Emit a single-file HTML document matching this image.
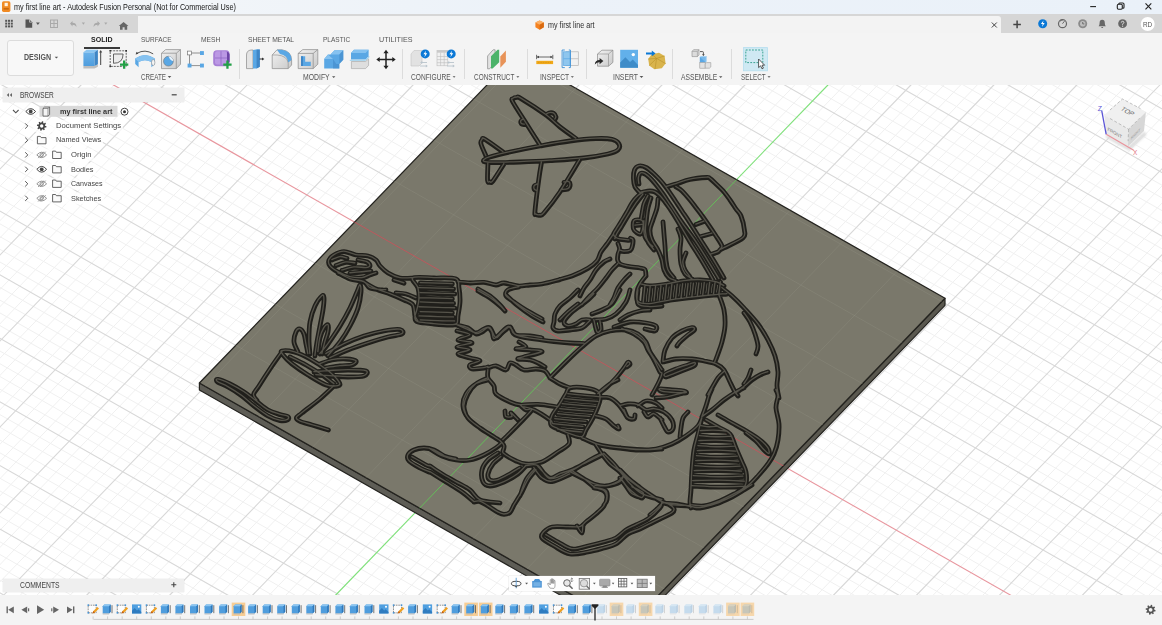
<!DOCTYPE html>
<html lang="en"><head><meta charset="utf-8"><title>my first line art - Autodesk Fusion</title>
<style>
html,body{margin:0;padding:0}
body{width:1162px;height:625px;overflow:hidden;position:relative;background:#fff;font-family:"Liberation Sans",sans-serif;font-size:8px;color:#3c3c3c}
.abs{position:absolute}
.cv{position:absolute;left:0;top:0}
.t{position:absolute;transform-origin:0 50%;white-space:nowrap;line-height:1.15;font-family:"Liberation Sans",sans-serif}
.titlebar{position:absolute;left:0;top:0;width:1162px;height:14px;background:linear-gradient(90deg,#f5f7f9 0,#ecf2f9 45%,#eaf1f9 100%)}
.qat{position:absolute;left:0;top:14px;width:1162px;height:19px;background:#d6d6d6}
.tab{position:absolute;left:137.500px;top:1.500px;width:863.500px;height:17.500px;background:#f3f3f3;border-radius:0 3px 0 0}
.ribbon{position:absolute;left:0;top:33px;width:1162px;height:52px;background:#f4f4f4}
.dbtn{position:absolute;left:7px;top:39.500px;width:66.500px;height:36.800px;box-sizing:border-box;border:1px solid #dcdcdc;border-radius:3px;background:#f8f8f8}
.phead{position:absolute;background:#efefef;box-shadow:0 0 1px #ccc}
.bottombar{position:absolute;left:0;top:594.500px;width:1162px;height:31px;background:#f4f4f4}
</style></head>
<body>
<svg class="cv" width="1162" height="625" viewBox="0 0 1162 625">
<rect width="1162" height="625" fill="#fff"/>
<path d="M-4.0 70.0L-20.0 86.5M29.2 70.0L-20.0 120.9M45.8 70.0L-20.0 138.1M1160.7 70.0L1182.0 82.1M62.3 70.0L-20.0 155.3M1138.3 70.0L1182.0 94.8M78.9 70.0L-20.0 172.5M1115.9 70.0L1182.0 107.6M112.1 70.0L-20.0 206.9M1071.2 70.0L1182.0 133.0M128.7 70.0L-20.0 224.1M1048.9 70.0L1182.0 145.7M145.3 70.0L-20.0 241.3M1026.5 70.0L1182.0 158.4M161.9 70.0L-20.0 258.5M1004.1 70.0L1182.0 171.2M195.1 70.0L-20.0 292.9M959.4 70.0L1182.0 196.6M211.7 70.0L-20.0 310.1M937.0 70.0L1182.0 209.3M228.3 70.0L-20.0 327.3M914.7 70.0L1182.0 222.0M244.9 70.0L-20.0 344.5M892.3 70.0L1182.0 234.7M278.1 70.0L-20.0 378.9M847.6 70.0L1182.0 260.2M294.7 70.0L-20.0 396.1M825.2 70.0L1182.0 272.9M311.3 70.0L-20.0 413.3M802.8 70.0L1182.0 285.6M327.9 70.0L-20.0 430.5M780.5 70.0L1182.0 298.3M361.1 70.0L-20.0 464.9M735.7 70.0L1182.0 323.8M377.7 70.0L-20.0 482.1M713.4 70.0L1182.0 336.5M394.3 70.0L-20.0 499.3M691.0 70.0L1182.0 349.2M410.9 70.0L-20.0 516.5M668.7 70.0L1182.0 361.9M444.1 70.0L-20.0 550.9M623.9 70.0L1182.0 387.4M460.7 70.0L-20.0 568.1M601.6 70.0L1182.0 400.1M477.3 70.0L-20.0 585.3M579.2 70.0L1182.0 412.8M493.9 70.0L-20.0 602.5M556.8 70.0L1182.0 425.5M527.0 70.0L6.0 610.0M512.1 70.0L1182.0 451.0M543.6 70.0L22.6 610.0M489.7 70.0L1182.0 463.7M560.2 70.0L39.2 610.0M467.4 70.0L1182.0 476.4M576.8 70.0L55.8 610.0M445.0 70.0L1182.0 489.1M610.0 70.0L89.0 610.0M400.3 70.0L1182.0 514.5M626.6 70.0L105.6 610.0M377.9 70.0L1182.0 527.3M643.2 70.0L122.2 610.0M355.6 70.0L1182.0 540.0M659.8 70.0L138.8 610.0M333.2 70.0L1182.0 552.7M693.0 70.0L171.9 610.0M288.5 70.0L1182.0 578.1M709.6 70.0L188.5 610.0M266.1 70.0L1182.0 590.9M726.2 70.0L205.1 610.0M243.7 70.0L1182.0 603.6M742.8 70.0L221.7 610.0M221.4 70.0L1170.9 610.0M776.0 70.0L254.9 610.0M176.6 70.0L1126.2 610.0M792.6 70.0L271.5 610.0M154.3 70.0L1103.8 610.0M809.2 70.0L288.1 610.0M131.9 70.0L1081.5 610.0M825.8 70.0L304.7 610.0M109.5 70.0L1059.1 610.0M859.0 70.0L337.9 610.0M64.8 70.0L1014.4 610.0M875.6 70.0L354.5 610.0M42.5 70.0L992.0 610.0M892.2 70.0L371.1 610.0M20.1 70.0L969.7 610.0M908.8 70.0L387.7 610.0M-2.3 70.0L947.3 610.0M942.0 70.0L420.9 610.0M-20.0 85.4L902.6 610.0M958.5 70.0L437.5 610.0M-20.0 98.1L880.2 610.0M975.1 70.0L454.1 610.0M-20.0 110.8L857.8 610.0M991.7 70.0L470.7 610.0M-20.0 123.5L835.5 610.0M1024.9 70.0L503.9 610.0M-20.0 148.9L790.7 610.0M1041.5 70.0L520.5 610.0M-20.0 161.7L768.4 610.0M1058.1 70.0L537.1 610.0M-20.0 174.4L746.0 610.0M1074.7 70.0L553.7 610.0M-20.0 187.1L723.6 610.0M1107.9 70.0L586.9 610.0M-20.0 212.5L678.9 610.0M1124.5 70.0L603.4 610.0M-20.0 225.3L656.6 610.0M1141.1 70.0L620.0 610.0M-20.0 238.0L634.2 610.0M1157.7 70.0L636.6 610.0M-20.0 250.7L611.8 610.0M1182.0 79.2L669.8 610.0M-20.0 276.1L567.1 610.0M1182.0 96.4L686.4 610.0M-20.0 288.8L544.7 610.0M1182.0 113.6L703.0 610.0M-20.0 301.6L522.4 610.0M1182.0 130.8L719.6 610.0M-20.0 314.3L500.0 610.0M1182.0 165.2L752.8 610.0M-20.0 339.7L455.3 610.0M1182.0 182.4L769.4 610.0M-20.0 352.4L432.9 610.0M1182.0 199.6L786.0 610.0M-20.0 365.2L410.5 610.0M1182.0 216.8L802.6 610.0M-20.0 377.9L388.2 610.0M1182.0 251.2L835.8 610.0M-20.0 403.3L343.4 610.0M1182.0 268.4L852.4 610.0M-20.0 416.0L321.1 610.0M1182.0 285.6L869.0 610.0M-20.0 428.7L298.7 610.0M1182.0 302.8L885.6 610.0M-20.0 441.5L276.4 610.0M1182.0 337.2L918.8 610.0M-20.0 466.9L231.6 610.0M1182.0 354.4L935.4 610.0M-20.0 479.6L209.3 610.0M1182.0 371.6L952.0 610.0M-20.0 492.3L186.9 610.0M1182.0 388.8L968.6 610.0M-20.0 505.1L164.5 610.0M1182.0 423.2L1001.8 610.0M-20.0 530.5L119.8 610.0M1182.0 440.4L1018.4 610.0M-20.0 543.2L97.4 610.0M1182.0 457.6L1035.0 610.0M-20.0 555.9L75.1 610.0M1182.0 474.8L1051.5 610.0M-20.0 568.7L52.7 610.0M1182.0 509.2L1084.7 610.0M-20.0 594.1L8.0 610.0M1182.0 526.4L1101.3 610.0M-20.0 606.8L-14.4 610.0M1182.0 543.6L1117.9 610.0M1182.0 560.8L1134.5 610.0M1182.0 595.2L1167.7 610.0" stroke="#f0f0f0" stroke-width="1" fill="none"/>
<path d="M12.6 70.0L-20.0 103.7M95.5 70.0L-20.0 189.7M1093.6 70.0L1182.0 120.3M178.5 70.0L-20.0 275.7M981.8 70.0L1182.0 183.9M261.5 70.0L-20.0 361.7M869.9 70.0L1182.0 247.5M344.5 70.0L-20.0 447.7M758.1 70.0L1182.0 311.1M427.5 70.0L-20.0 533.7M646.3 70.0L1182.0 374.6M510.4 70.0L-10.6 610.0M534.5 70.0L1182.0 438.2M593.4 70.0L72.4 610.0M422.6 70.0L1182.0 501.8M676.4 70.0L155.4 610.0M310.8 70.0L1182.0 565.4M759.4 70.0L238.3 610.0M199.0 70.0L1148.6 610.0M925.4 70.0L404.3 610.0M-20.0 72.6L924.9 610.0M1008.3 70.0L487.3 610.0M-20.0 136.2L813.1 610.0M1091.3 70.0L570.3 610.0M-20.0 199.8L701.3 610.0M1174.3 70.0L653.2 610.0M-20.0 263.4L589.5 610.0M1182.0 148.0L736.2 610.0M-20.0 327.0L477.6 610.0M1182.0 234.0L819.2 610.0M-20.0 390.6L365.8 610.0M1182.0 320.0L902.2 610.0M-20.0 454.2L254.0 610.0M1182.0 406.0L985.2 610.0M-20.0 517.8L142.2 610.0M1182.0 492.0L1068.1 610.0M-20.0 581.4L30.3 610.0M1182.0 578.0L1151.1 610.0" stroke="#d8d8d8" stroke-width="1.1" fill="none"/>
<path d="M87.2 70.0L1036.7 610.0" stroke="#e8969e" stroke-width="1.1"/>
<path d="M842.4 70.0L321.3 610.0" stroke="#7fe07a" stroke-width="1.1"/>
<polygon points="199.4,383.0 628.1,626.7 628.1,633.7 199.4,390.0" fill="#5e5d56" stroke="#24231f" stroke-width="1.2" stroke-linejoin="round"/>
<polygon points="945.0,298.3 628.1,626.7 628.1,633.7 945.0,305.3" fill="#5a584f" stroke="#24231f" stroke-width="1.2" stroke-linejoin="round"/>
<polygon points="516.4,54.5 945.0,298.3 628.1,626.7 199.4,383.0" fill="#7a786b" stroke="#24231f" stroke-width="1.3" stroke-linejoin="round"/>
<clipPath id="pc"><polygon points="516.4,54.5 945.0,298.3 628.1,626.7 199.4,383.0"/></clipPath>
<g clip-path="url(#pc)">
<path d="M12.6 70.0L-20.0 103.7M95.5 70.0L-20.0 189.7M1093.6 70.0L1182.0 120.3M178.5 70.0L-20.0 275.7M981.8 70.0L1182.0 183.9M261.5 70.0L-20.0 361.7M869.9 70.0L1182.0 247.5M344.5 70.0L-20.0 447.7M758.1 70.0L1182.0 311.1M427.5 70.0L-20.0 533.7M646.3 70.0L1182.0 374.6M510.4 70.0L-10.6 610.0M534.5 70.0L1182.0 438.2M593.4 70.0L72.4 610.0M422.6 70.0L1182.0 501.8M676.4 70.0L155.4 610.0M310.8 70.0L1182.0 565.4M759.4 70.0L238.3 610.0M199.0 70.0L1148.6 610.0M925.4 70.0L404.3 610.0M-20.0 72.6L924.9 610.0M1008.3 70.0L487.3 610.0M-20.0 136.2L813.1 610.0M1091.3 70.0L570.3 610.0M-20.0 199.8L701.3 610.0M1174.3 70.0L653.2 610.0M-20.0 263.4L589.5 610.0M1182.0 148.0L736.2 610.0M-20.0 327.0L477.6 610.0M1182.0 234.0L819.2 610.0M-20.0 390.6L365.8 610.0M1182.0 320.0L902.2 610.0M-20.0 454.2L254.0 610.0M1182.0 406.0L985.2 610.0M-20.0 517.8L142.2 610.0M1182.0 492.0L1068.1 610.0M-20.0 581.4L30.3 610.0M1182.0 578.0L1151.1 610.0" stroke="#98968a" stroke-opacity=".28" stroke-width="1" fill="none"/>
<path d="M87.2 70.0L1036.7 610.0" stroke="#c8525a" stroke-opacity=".85" stroke-width="1"/>
<path d="M842.4 70.0L321.3 610.0" stroke="#62c558" stroke-opacity=".9" stroke-width="1"/>
</g>
<g fill="none" stroke-linecap="round" stroke-linejoin="round" clip-path="url(#pc)"><path d="M484.0 160.0C484.8 159.2 485.7 158.3 490.0 157.0C494.3 155.7 501.7 153.8 510.0 152.0C518.3 150.2 530.0 147.8 540.0 146.0C550.0 144.2 560.7 142.2 570.0 141.0C579.3 139.8 589.0 138.9 596.0 138.6C603.0 138.3 608.2 138.5 612.0 139.4C615.8 140.3 618.0 142.2 619.0 144.0C620.0 145.8 619.8 148.3 618.0 150.0C616.2 151.7 613.7 152.7 608.0 154.0C602.3 155.3 593.7 156.9 584.0 158.0C574.3 159.1 560.7 159.9 550.0 160.6C539.3 161.3 529.0 161.7 520.0 162.0C511.0 162.3 501.8 162.6 496.0 162.6C490.2 162.6 487.0 162.4 485.0 162.0C483.0 161.6 483.2 160.8 484.0 160.0zM540.0 145.0C537.7 141.3 530.5 130.2 526.0 123.0C521.5 115.8 514.9 106.1 512.8 102.0C510.7 97.9 512.5 99.4 513.2 98.6C513.9 97.8 515.7 97.4 517.0 97.4C518.3 97.4 516.2 95.7 521.0 98.6C525.8 101.5 539.5 110.3 546.0 115.0C552.5 119.7 555.0 123.1 560.0 127.0C565.0 130.9 573.3 136.7 576.0 138.6M546.0 115.0C546.5 114.7 547.7 113.3 549.0 113.0C550.3 112.7 552.4 112.7 553.6 113.4C554.8 114.1 555.8 116.0 556.0 117.0C556.2 118.0 555.2 119.0 555.0 119.4M523.6 119.4C523.2 119.7 521.3 120.2 521.0 121.0C520.7 121.8 521.0 123.4 521.6 124.0C522.2 124.6 523.9 124.5 524.4 124.6M486.0 156.0C485.2 154.0 481.7 146.7 481.0 144.0C480.3 141.3 481.3 140.8 482.0 140.0C482.7 139.2 481.5 137.4 485.0 139.4C488.5 141.4 500.0 149.9 503.0 152.0M488.0 163.0C487.9 165.9 487.3 177.4 487.6 180.6C487.9 183.8 489.1 181.9 490.0 182.0C490.9 182.1 490.7 184.0 493.0 181.0C495.3 178.0 502.2 166.8 504.0 164.0M541.6 162.0C541.2 164.7 540.1 169.8 539.0 178.0C537.9 186.2 535.5 204.9 535.0 211.0C534.5 217.1 535.2 213.7 536.0 214.4C536.8 215.1 538.7 215.4 540.0 215.2C541.3 215.0 540.7 216.9 544.0 213.0C547.3 209.1 554.1 200.8 560.0 192.0C565.9 183.2 576.3 165.3 579.6 160.0M537.6 184.4C537.1 184.7 534.9 185.1 534.4 186.0C533.9 186.9 534.0 188.8 534.4 189.6C534.8 190.4 536.6 190.8 537.0 191.0M564.0 182.4C564.8 182.3 568.0 181.4 569.0 182.0C570.0 182.6 570.2 184.8 570.0 186.0C569.8 187.2 569.5 188.3 568.0 189.0C566.5 189.7 562.2 189.8 561.0 190.0M640.0 193.0C639.2 192.0 636.1 189.3 635.0 187.0C633.9 184.7 633.6 181.8 633.5 179.0C633.4 176.2 633.6 172.2 634.5 170.0C635.4 167.8 637.1 166.4 639.0 166.0C640.9 165.6 643.7 166.3 646.0 167.5C648.3 168.7 650.7 170.9 653.0 173.0C655.3 175.1 658.0 177.8 660.0 180.0C662.0 182.2 663.3 183.8 665.0 186.0C666.7 188.2 668.2 190.3 670.0 193.0C671.8 195.7 674.0 199.0 676.0 202.0C678.0 205.0 679.7 207.5 682.0 211.0C684.3 214.5 686.7 217.8 690.0 223.0C693.3 228.2 698.0 235.7 702.0 242.0C706.0 248.3 710.3 255.0 714.0 261.0C717.7 267.0 722.3 275.2 724.0 278.0M639.0 184.0C638.9 183.0 638.2 179.8 638.5 178.0C638.8 176.2 639.4 174.2 640.5 173.5C641.6 172.8 643.2 173.1 645.0 174.0C646.8 174.9 649.0 177.0 651.0 179.0C653.0 181.0 655.0 183.5 657.0 186.0C659.0 188.5 661.0 191.2 663.0 194.0C665.0 196.8 667.0 200.0 669.0 203.0C671.0 206.0 672.7 208.5 675.0 212.0C677.3 215.5 679.5 219.0 683.0 224.0C686.5 229.0 691.8 235.8 696.0 242.0C700.2 248.2 704.2 254.8 708.0 261.0C711.8 267.2 717.2 276.0 719.0 279.0M640.0 193.0C640.5 192.8 641.3 192.3 643.0 192.0C644.7 191.7 648.0 191.0 650.0 191.0C652.0 191.0 653.3 191.2 655.0 192.0C656.7 192.8 658.3 194.3 660.0 196.0C661.7 197.7 663.3 199.8 665.0 202.0C666.7 204.2 668.0 206.0 670.0 209.0C672.0 212.0 673.7 214.5 677.0 220.0C680.3 225.5 685.8 235.2 690.0 242.0C694.2 248.8 698.2 254.7 702.0 261.0C705.8 267.3 711.2 276.8 713.0 280.0M666.0 187.0C667.7 186.5 672.0 185.2 676.0 184.0C680.0 182.8 684.8 180.6 690.0 179.5C695.2 178.4 703.7 177.7 707.0 177.5C710.3 177.3 708.5 177.4 710.0 178.5C711.5 179.6 713.7 181.8 716.0 184.0C718.3 186.2 721.7 189.3 724.0 192.0C726.3 194.7 728.0 197.2 730.0 200.0C732.0 202.8 734.2 206.3 736.0 209.0C737.8 211.7 739.6 212.5 741.0 216.0C742.4 219.5 744.1 226.3 744.4 230.0C744.7 233.7 746.4 235.0 743.0 238.0C739.6 241.0 727.8 246.0 724.0 248.0C720.2 250.0 721.0 249.3 720.0 250.0C719.0 250.7 719.5 251.3 718.0 252.0C716.5 252.7 712.2 254.0 711.0 254.4M676.0 187.0C677.0 187.7 679.7 188.8 682.0 191.0C684.3 193.2 687.5 197.0 690.0 200.0C692.5 203.0 694.8 206.2 697.0 209.0C699.2 211.8 699.8 212.5 703.0 217.0C706.2 221.5 712.8 231.2 716.0 236.0C719.2 240.8 721.3 243.7 722.0 246.0C722.7 248.3 720.3 249.3 720.0 250.0M696.0 224.5L704.0 221.5M701.0 236.5L712.0 233.5M644.0 192.0C643.0 192.7 640.0 194.2 638.0 196.0C636.0 197.8 633.8 200.3 632.0 203.0C630.2 205.7 628.8 208.8 627.0 212.0C625.2 215.2 622.8 219.0 621.0 222.0C619.2 225.0 617.2 227.9 616.0 230.0C614.8 232.1 613.6 233.1 613.6 234.4C613.6 235.7 614.9 237.2 616.0 238.0C617.1 238.8 617.8 239.0 620.0 239.4C622.2 239.8 627.5 240.2 629.0 240.4M630.4 238.4C630.8 238.7 632.7 238.7 633.0 240.0C633.3 241.3 632.8 244.3 632.4 246.0C632.0 247.7 631.8 249.5 630.4 250.4C629.0 251.3 625.8 251.6 624.0 251.6C622.2 251.6 620.3 250.6 619.6 250.4M618.0 243.6C618.3 244.5 619.6 247.2 619.6 249.0C619.6 250.8 618.3 252.6 618.0 254.4C617.7 256.2 617.3 258.4 617.6 260.0C617.9 261.6 618.3 262.9 620.0 264.0C621.7 265.1 624.7 265.7 628.0 266.4C631.3 267.1 637.2 267.5 640.0 268.0C642.8 268.5 644.0 268.3 645.0 269.6C646.0 270.9 645.8 274.9 646.0 276.0M634.0 221.0C635.1 219.5 638.5 219.8 640.0 220.0C641.5 220.2 642.5 220.7 643.0 222.0C643.5 223.3 643.3 226.0 643.0 228.0C642.7 230.0 642.0 233.2 641.0 234.0C640.0 234.8 638.2 233.8 637.0 233.0C635.8 232.2 634.0 231.0 633.5 229.0C633.0 227.0 632.9 222.5 634.0 221.0zM635.0 225.5L642.0 224.8M643.0 194.5C641.7 196.2 637.5 201.4 635.0 205.0C632.5 208.6 630.2 212.5 628.0 216.0C625.8 219.5 623.8 223.0 622.0 226.0C620.2 229.0 618.2 231.8 617.0 234.0C615.8 236.2 615.3 238.2 615.0 239.0M644.0 221.0C644.0 222.5 643.8 227.3 644.0 230.0C644.2 232.7 644.2 234.8 645.0 237.0C645.8 239.2 647.7 241.3 649.0 243.0C650.3 244.7 652.3 246.3 653.0 247.0M658.0 199.0C657.8 200.5 657.8 204.5 657.0 208.0C656.2 211.5 654.2 216.3 653.0 220.0C651.8 223.7 650.2 226.7 650.0 230.0C649.8 233.3 650.7 236.7 652.0 240.0C653.3 243.3 656.3 246.7 658.0 250.0C659.7 253.3 661.0 256.7 662.0 260.0C663.0 263.3 662.8 267.0 664.0 270.0C665.2 273.0 667.0 276.2 669.0 278.0C671.0 279.8 674.8 280.5 676.0 281.0M648.0 196.0C647.3 197.3 645.0 201.0 644.0 204.0C643.0 207.0 642.5 211.3 642.0 214.0C641.5 216.7 641.2 219.0 641.0 220.0M651.0 198.0C650.5 199.7 648.8 204.3 648.0 208.0C647.2 211.7 646.8 216.0 646.4 220.0C646.0 224.0 645.3 228.3 645.6 232.0C645.9 235.7 646.6 239.0 648.0 242.0C649.4 245.0 653.0 248.7 654.0 250.0M663.0 222.0C663.2 224.0 663.7 230.0 664.0 234.0C664.3 238.0 664.7 241.7 665.0 246.0C665.3 250.3 665.5 256.0 666.0 260.0C666.5 264.0 666.7 267.0 668.0 270.0C669.3 273.0 673.0 276.7 674.0 278.0M678.0 229.0C678.5 230.5 680.7 234.5 681.0 238.0C681.3 241.5 680.0 245.7 680.0 250.0C680.0 254.3 680.2 260.0 681.0 264.0C681.8 268.0 683.2 271.5 685.0 274.0C686.8 276.5 690.8 278.2 692.0 279.0M686.0 253.0C685.5 254.5 683.2 259.2 683.0 262.0C682.8 264.8 683.8 267.5 685.0 270.0C686.2 272.5 689.2 275.8 690.0 277.0M613.6 234.4C612.5 236.0 609.1 241.1 607.0 244.0C604.9 246.9 602.7 249.2 601.0 252.0C599.3 254.8 599.2 258.3 597.0 261.0C594.8 263.7 592.2 265.9 588.0 268.4C583.8 270.9 576.7 274.2 572.0 276.0C567.3 277.8 562.0 278.8 560.0 279.4M610.0 259.0C609.0 259.5 606.3 260.2 604.0 262.0C601.7 263.8 598.3 267.0 596.0 270.0C593.7 273.0 592.0 277.0 590.0 280.0C588.0 283.0 585.7 285.3 584.0 288.0C582.3 290.7 580.7 294.7 580.0 296.0M618.0 264.0C617.0 265.0 614.0 267.7 612.0 270.0C610.0 272.3 608.3 275.0 606.0 278.0C603.7 281.0 600.7 285.0 598.0 288.0C595.3 291.0 592.7 293.2 590.0 296.0C587.3 298.8 583.3 303.5 582.0 305.0M630.0 274.0C629.0 275.0 626.0 277.7 624.0 280.0C622.0 282.3 619.7 285.0 618.0 288.0C616.3 291.0 615.3 295.2 614.0 298.0C612.7 300.8 610.7 303.8 610.0 305.0M646.0 276.0C645.0 277.3 641.5 281.3 640.0 284.0C638.5 286.7 637.3 289.0 637.0 292.0C636.7 295.0 635.8 300.0 638.0 302.0C640.2 304.0 644.3 304.3 650.0 304.0C655.7 303.7 664.3 301.2 672.0 300.0C679.7 298.8 688.7 297.8 696.0 297.0C703.3 296.2 710.8 295.5 716.0 295.0C721.2 294.5 725.2 294.2 727.0 294.0M640.0 284.0C641.7 284.3 645.3 286.0 650.0 286.0C654.7 286.0 662.3 284.8 668.0 284.0C673.7 283.2 678.7 281.7 684.0 281.0C689.3 280.3 694.7 279.8 700.0 280.0C705.3 280.2 712.0 281.0 716.0 282.0C720.0 283.0 722.7 285.3 724.0 286.0M645.0 286.4L643.4 302.4M650.4 286.0L648.8 301.8M655.8 285.8L654.2 301.2M661.2 285.4L659.6 300.6M666.6 285.2L665.0 300.0M672.0 284.8L670.4 299.6M677.4 284.6L675.8 299.0M682.8 284.2L681.2 298.4M688.2 284.0L686.6 297.8M693.6 283.6L692.0 297.2M699.0 283.4L697.4 296.8M704.4 283.0L702.8 296.2M709.8 282.8L708.2 295.6M715.2 282.4L713.6 295.0M720.6 282.2L719.0 294.4M376.0 273.0C375.0 273.3 372.3 274.2 370.0 275.0C367.7 275.8 365.3 277.7 362.0 278.0C358.7 278.3 354.0 278.0 350.0 277.0C346.0 276.0 341.3 273.8 338.0 272.0C334.7 270.2 331.5 268.0 330.0 266.0C328.5 264.0 328.3 261.8 329.0 260.0C329.7 258.2 331.5 256.4 334.0 255.0C336.5 253.6 340.3 251.6 344.0 251.6C347.7 251.6 352.0 254.3 356.0 255.0C360.0 255.7 364.7 255.2 368.0 256.0C371.3 256.8 374.0 258.3 376.0 260.0C378.0 261.7 378.0 263.8 380.0 266.0C382.0 268.2 384.7 271.0 388.0 273.0C391.3 275.0 395.7 277.2 400.0 278.0C404.3 278.8 411.7 278.0 414.0 278.0M332.0 260.0C333.3 259.5 337.5 257.3 340.0 257.0C342.5 256.7 345.8 258.2 347.0 258.4M336.0 265.6C337.7 265.1 342.8 262.8 346.0 262.4C349.2 262.0 353.5 263.1 355.0 263.2M342.0 270.4C344.0 269.9 350.0 267.8 354.0 267.4C358.0 267.0 363.3 268.2 366.0 268.0C368.7 267.8 369.8 267.0 370.0 266.0C370.2 265.0 369.0 263.0 367.0 262.0C365.0 261.0 359.5 260.3 358.0 260.0M350.0 273.2C352.0 273.0 358.5 272.5 362.0 272.2C365.5 271.9 369.5 271.4 371.0 271.2M338.0 273.0C340.0 274.0 345.7 277.5 350.0 279.0C354.3 280.5 360.7 280.5 364.0 282.0C367.3 283.5 367.0 286.7 370.0 288.0C373.0 289.3 379.3 289.7 382.0 290.0C384.7 290.3 385.3 290.0 386.0 290.0M394.0 280.0L404.0 283.2M396.0 293.0C397.7 293.2 402.7 293.2 406.0 294.0C409.3 294.8 414.3 297.3 416.0 298.0M364.0 282.0C366.0 283.2 371.7 287.0 376.0 289.0C380.3 291.0 385.3 292.2 390.0 294.0C394.7 295.8 400.2 298.2 404.0 300.0C407.8 301.8 411.2 302.3 413.0 305.0C414.8 307.7 414.2 313.3 415.0 316.0C415.8 318.7 417.5 320.2 418.0 321.0M413.0 278.0C415.7 276.3 426.8 277.8 434.0 278.0C441.2 278.2 451.8 277.3 456.0 279.0C460.2 280.7 458.3 284.2 459.0 288.0C459.7 291.8 460.2 297.3 460.0 302.0C459.8 306.7 458.5 312.3 458.0 316.0C457.5 319.7 458.3 322.5 457.0 324.0C455.7 325.5 453.8 325.0 450.0 325.0C446.2 325.0 439.3 324.5 434.0 324.0C428.7 323.5 421.2 323.0 418.0 322.0C414.8 321.0 415.2 320.0 415.0 318.0C414.8 316.0 416.3 313.0 417.0 310.0C417.7 307.0 418.8 303.7 419.0 300.0C419.2 296.3 419.0 291.7 418.0 288.0C417.0 284.3 410.3 279.7 413.0 278.0zM420.4 283.0C423.3 283.1 432.7 283.4 438.0 283.6C443.3 283.8 450.0 283.9 452.4 284.0M419.2 288.0C422.3 288.1 432.3 288.4 438.0 288.6C443.7 288.8 451.0 288.9 453.6 289.0M420.4 293.0C423.3 293.1 432.3 293.4 438.0 293.6C443.7 293.8 452.0 293.9 454.8 294.0M419.2 298.0C422.3 298.1 432.5 298.4 438.0 298.6C443.5 298.8 450.0 298.9 452.4 299.0M420.4 302.4C423.3 302.5 432.5 302.8 438.0 303.0C443.5 303.2 451.0 303.3 453.6 303.4M419.2 307.2C422.3 307.3 432.1 307.6 438.0 307.8C443.9 308.0 452.0 308.1 454.8 308.2M420.4 312.0C423.3 312.1 432.7 312.4 438.0 312.6C443.3 312.8 450.0 312.9 452.4 313.0M419.2 316.4C422.3 316.5 432.3 316.8 438.0 317.0C443.7 317.2 451.0 317.3 453.6 317.4M420.4 320.4C423.3 320.5 432.3 320.8 438.0 321.0C443.7 321.2 452.0 321.3 454.8 321.4M458.0 282.0C460.0 282.2 465.7 282.9 470.0 283.0C474.3 283.1 479.7 282.1 484.0 282.4C488.3 282.7 492.7 284.9 496.0 285.0C499.3 285.1 500.3 282.8 504.0 283.0C507.7 283.2 513.7 285.7 518.0 286.0C522.3 286.3 526.0 285.3 530.0 285.0C534.0 284.7 537.0 284.9 542.0 284.0C547.0 283.1 557.0 280.3 560.0 279.6M478.0 289.0C480.0 290.2 486.3 293.3 490.0 296.0C493.7 298.7 497.5 302.5 500.0 305.0C502.5 307.5 504.2 310.0 505.0 311.0M519.0 287.0C517.2 287.5 510.2 288.5 508.0 290.0C505.8 291.5 505.0 294.0 506.0 296.0C507.0 298.0 510.7 299.7 514.0 302.0C517.3 304.3 521.3 307.2 526.0 310.0C530.7 312.8 539.3 317.5 542.0 319.0M457.0 325.0C458.8 325.5 464.8 326.5 468.0 328.0C471.2 329.5 473.7 333.3 476.0 334.0C478.3 334.7 480.0 333.0 482.0 332.0C484.0 331.0 486.3 328.0 488.0 328.0C489.7 328.0 491.0 330.2 492.0 332.0C493.0 333.8 492.7 338.7 494.0 339.0C495.3 339.3 497.7 336.0 500.0 334.0C502.3 332.0 506.0 327.7 508.0 327.0C510.0 326.3 510.7 328.7 512.0 330.0C513.3 331.3 513.0 334.0 516.0 335.0C519.0 336.0 525.7 335.5 530.0 336.0C534.3 336.5 540.0 337.7 542.0 338.0M310.0 354.0C309.8 351.7 309.0 345.3 309.0 340.0C309.0 334.7 309.0 327.7 310.0 322.0C311.0 316.3 313.0 310.3 315.0 306.0C317.0 301.7 320.5 297.3 322.0 296.0C323.5 294.7 323.8 295.7 324.0 298.0C324.2 300.3 323.7 305.3 323.0 310.0C322.3 314.7 321.0 320.7 320.0 326.0C319.0 331.3 317.8 337.0 317.0 342.0C316.2 347.0 315.3 353.7 315.0 356.0M320.0 354.0C321.3 352.3 324.7 348.7 328.0 344.0C331.3 339.3 336.3 332.0 340.0 326.0C343.7 320.0 347.2 313.7 350.0 308.0C352.8 302.3 355.3 295.8 357.0 292.0C358.7 288.2 359.3 285.0 360.0 285.0C360.7 285.0 361.3 288.2 361.0 292.0C360.7 295.8 359.8 302.3 358.0 308.0C356.2 313.7 353.0 320.3 350.0 326.0C347.0 331.7 343.7 337.0 340.0 342.0C336.3 347.0 330.0 353.7 328.0 356.0M298.0 352.0C297.3 350.3 294.3 345.3 294.0 342.0C293.7 338.7 295.0 334.2 296.0 332.0C297.0 329.8 298.7 328.7 300.0 329.0C301.3 329.3 303.0 331.5 304.0 334.0C305.0 336.5 305.3 340.7 306.0 344.0C306.7 347.3 307.7 352.3 308.0 354.0M318.0 352.0C318.3 349.7 319.0 342.0 320.0 338.0C321.0 334.0 322.7 330.2 324.0 328.0C325.3 325.8 327.3 324.3 328.0 325.0C328.7 325.7 328.5 329.2 328.0 332.0C327.5 334.8 326.0 338.3 325.0 342.0C324.0 345.7 322.5 352.0 322.0 354.0M326.0 354.0C329.0 352.3 337.7 347.0 344.0 344.0C350.3 341.0 357.3 338.2 364.0 336.0C370.7 333.8 378.0 332.1 384.0 331.0C390.0 329.9 397.0 329.1 400.0 329.6C403.0 330.1 404.0 332.8 402.0 334.0C400.0 335.2 393.7 335.5 388.0 337.0C382.3 338.5 374.7 340.8 368.0 343.0C361.3 345.2 354.3 347.5 348.0 350.0C341.7 352.5 333.0 356.7 330.0 358.0M320.0 364.0C322.0 363.3 327.7 360.8 332.0 360.0C336.3 359.2 342.0 358.8 346.0 359.0C350.0 359.2 355.0 360.0 356.0 361.0C357.0 362.0 354.7 364.2 352.0 365.0C349.3 365.8 344.3 365.5 340.0 366.0C335.7 366.5 328.3 367.7 326.0 368.0M314.0 372.0C316.3 371.8 322.3 371.3 328.0 371.0C333.7 370.7 341.7 370.0 348.0 370.0C354.3 370.0 363.3 370.0 366.0 371.0C368.7 372.0 367.0 375.0 364.0 376.0C361.0 377.0 353.7 377.0 348.0 377.0C342.3 377.0 335.3 376.3 330.0 376.0C324.7 375.7 318.3 375.2 316.0 375.0M282.0 351.0C283.8 350.5 289.3 350.7 294.0 352.0C298.7 353.3 304.3 355.8 310.0 359.0C315.7 362.2 323.2 367.2 328.0 371.0C332.8 374.8 337.3 379.5 339.0 382.0C340.7 384.5 340.2 385.5 338.0 386.0C335.8 386.5 331.0 386.8 326.0 385.0C321.0 383.2 313.7 378.5 308.0 375.0C302.3 371.5 296.2 367.3 292.0 364.0C287.8 360.7 284.7 357.2 283.0 355.0C281.3 352.8 280.2 351.5 282.0 351.0zM290.0 357.0C292.7 358.3 300.7 362.0 306.0 365.0C311.3 368.0 317.3 371.8 322.0 375.0C326.7 378.2 332.0 382.5 334.0 384.0M282.4 351.4C280.3 354.3 273.9 363.2 270.0 369.0C266.1 374.8 261.7 381.7 259.0 386.0C256.3 390.3 253.9 392.2 253.6 394.6C253.3 397.0 256.4 399.6 257.0 400.6M218.0 379.4C220.1 379.7 225.7 381.9 230.0 384.0C234.3 386.1 239.7 389.2 244.0 392.0C248.3 394.8 252.0 398.0 256.0 401.0C260.0 404.0 264.0 407.7 268.0 410.0C272.0 412.3 276.7 413.5 280.0 414.6C283.3 415.7 286.7 415.7 288.0 416.6C289.3 417.5 288.9 419.1 287.6 419.8C286.3 420.5 283.3 421.2 280.0 420.6C276.7 420.0 272.3 418.4 268.0 416.0C263.7 413.6 258.3 409.3 254.0 406.0C249.7 402.7 246.3 399.2 242.0 396.0C237.7 392.8 232.1 389.3 228.0 387.0C223.9 384.7 219.3 383.3 217.6 382.0C215.9 380.7 215.9 379.1 218.0 379.4zM334.0 386.0C331.7 388.2 325.3 394.5 320.0 399.0C314.7 403.5 305.9 409.8 302.0 413.0C298.1 416.2 296.7 416.6 296.4 418.0C296.1 419.4 297.4 420.2 300.0 421.4C302.6 422.6 307.3 423.6 312.0 425.0C316.7 426.4 325.7 429.2 328.4 430.0M457.0 325.0C458.5 325.7 462.8 327.7 466.0 329.0C469.2 330.3 473.0 333.0 476.0 333.0C479.0 333.0 481.7 329.8 484.0 329.0C486.3 328.2 488.0 326.5 490.0 328.0C492.0 329.5 494.0 337.2 496.0 338.0C498.0 338.8 499.7 334.8 502.0 333.0C504.3 331.2 508.2 327.0 510.0 327.0C511.8 327.0 511.7 331.5 513.0 333.0C514.3 334.5 514.5 335.0 518.0 336.0C521.5 337.0 528.0 338.1 534.0 339.0C540.0 339.9 548.0 340.9 554.0 341.6C560.0 342.3 565.0 342.7 570.0 343.0C575.0 343.3 581.7 343.5 584.0 343.6M457.0 331.0C459.2 331.7 469.8 333.5 470.0 335.0C470.2 336.5 457.7 338.7 458.0 340.0C458.3 341.3 472.2 341.8 472.0 343.0C471.8 344.2 457.3 345.8 457.0 347.0C456.7 348.2 469.8 348.8 470.0 350.0C470.2 351.2 458.0 352.7 458.0 354.0C458.0 355.3 466.3 356.8 470.0 358.0C473.7 359.2 480.0 359.8 480.0 361.0C480.0 362.2 471.3 363.7 470.0 365.0C468.7 366.3 469.7 368.5 472.0 369.0C474.3 369.5 481.3 368.3 484.0 368.0C486.7 367.7 487.3 367.2 488.0 367.0M488.0 368.0C489.3 367.7 493.0 365.7 496.0 366.0C499.0 366.3 503.7 370.5 506.0 370.0C508.3 369.5 508.3 363.8 510.0 363.0C511.7 362.2 513.7 363.8 516.0 365.0C518.3 366.2 520.7 369.3 524.0 370.0C527.3 370.7 532.5 368.8 536.0 369.0C539.5 369.2 542.7 369.5 545.0 371.0C547.3 372.5 549.2 376.8 550.0 378.0M519.0 342.0C520.2 342.8 526.5 345.8 526.0 347.0C525.5 348.2 515.3 348.5 516.0 349.0C516.7 349.5 525.7 349.5 530.0 350.0C534.3 350.5 543.0 350.8 542.0 352.0C541.0 353.2 528.0 355.8 524.0 357.0C520.0 358.2 517.0 358.5 518.0 359.0C519.0 359.5 526.7 359.3 530.0 360.0C533.3 360.7 535.5 361.8 538.0 363.0C540.5 364.2 543.8 366.3 545.0 367.0M478.0 291.0C480.0 292.2 486.3 295.5 490.0 298.0C493.7 300.5 497.5 303.8 500.0 306.0C502.5 308.2 504.2 310.2 505.0 311.0M506.0 295.0C508.0 296.8 513.7 302.5 518.0 306.0C522.3 309.5 527.8 313.3 532.0 316.0C536.2 318.7 541.2 321.0 543.0 322.0M578.0 290.0C576.7 291.3 573.0 295.3 570.0 298.0C567.0 300.7 562.5 303.3 560.0 306.0C557.5 308.7 556.0 311.3 555.0 314.0C554.0 316.7 554.3 319.7 554.0 322.0C553.7 324.3 552.3 326.5 553.0 328.0C553.7 329.5 555.2 330.7 558.0 331.0C560.8 331.3 566.0 330.5 570.0 330.0C574.0 329.5 579.0 329.2 582.0 328.0C585.0 326.8 586.7 324.3 588.0 323.0C589.3 321.7 591.0 320.5 590.0 320.0C589.0 319.5 584.3 319.3 582.0 320.0C579.7 320.7 578.3 323.0 576.0 324.0C573.7 325.0 570.0 326.3 568.0 326.0C566.0 325.7 563.7 324.0 564.0 322.0C564.3 320.0 567.3 316.7 570.0 314.0C572.7 311.3 577.0 308.3 580.0 306.0C583.0 303.7 585.7 302.0 588.0 300.0C590.3 298.0 593.0 295.0 594.0 294.0M560.0 320.0C561.3 318.7 565.0 314.7 568.0 312.0C571.0 309.3 576.3 305.3 578.0 304.0M592.0 314.0C593.7 313.3 598.7 311.7 602.0 310.0C605.3 308.3 609.0 307.3 612.0 304.0C615.0 300.7 618.7 292.3 620.0 290.0M596.0 320.0C597.7 319.8 602.7 320.0 606.0 319.0C609.3 318.0 612.7 316.8 616.0 314.0C619.3 311.2 623.7 306.0 626.0 302.0C628.3 298.0 629.3 292.0 630.0 290.0M594.0 320.0C594.5 322.0 595.8 330.3 597.0 332.0C598.2 333.7 600.5 331.8 601.0 330.0C601.5 328.2 600.2 322.5 600.0 321.0M550.0 378.0C552.7 375.3 560.7 367.2 566.0 362.0C571.3 356.8 577.0 351.3 582.0 347.0C587.0 342.7 591.3 338.7 596.0 336.0C600.7 333.3 605.0 332.0 610.0 331.0C615.0 330.0 621.3 329.5 626.0 330.0C630.7 330.5 634.7 332.0 638.0 334.0C641.3 336.0 644.0 339.0 646.0 342.0C648.0 345.0 648.0 348.3 650.0 352.0C652.0 355.7 656.0 361.0 658.0 364.0C660.0 367.0 661.3 369.0 662.0 370.0M614.0 327.0C616.7 326.2 624.7 322.7 630.0 322.0C635.3 321.3 641.7 322.3 646.0 323.0C650.3 323.7 654.5 324.7 656.0 326.0C657.5 327.3 656.8 330.5 655.0 331.0C653.2 331.5 646.7 329.3 645.0 329.0M638.0 290.0C638.0 292.3 636.0 301.2 638.0 304.0C640.0 306.8 646.0 306.7 650.0 307.0C654.0 307.3 660.0 306.2 662.0 306.0M627.0 367.0C627.5 366.6 629.8 365.2 630.0 364.4C630.2 363.6 629.0 361.8 628.0 362.4C627.0 363.0 626.0 365.4 624.0 368.0C622.0 370.6 619.0 374.7 616.0 378.0C613.0 381.3 609.0 385.3 606.0 388.0C603.0 390.7 599.3 393.0 598.0 394.0M488.0 378.0C486.0 379.0 479.3 381.3 476.0 384.0C472.7 386.7 470.0 390.3 468.0 394.0C466.0 397.7 464.3 402.5 464.0 406.0C463.7 409.5 465.7 413.5 466.0 415.0M488.0 370.0C488.0 371.3 487.0 375.3 488.0 378.0C489.0 380.7 492.7 383.3 494.0 386.0C495.3 388.7 493.3 391.3 496.0 394.0C498.7 396.7 506.0 400.2 510.0 402.0C514.0 403.8 515.3 404.6 520.0 405.0C524.7 405.4 531.7 404.1 538.0 404.4C544.3 404.7 554.7 406.6 558.0 407.0M550.0 378.0C551.7 379.0 556.7 382.3 560.0 384.0C563.3 385.7 568.3 387.3 570.0 388.0M488.0 380.0C486.0 380.7 479.7 381.7 476.0 384.0C472.3 386.3 468.2 390.3 466.0 394.0C463.8 397.7 462.7 402.0 463.0 406.0C463.3 410.0 465.2 414.3 468.0 418.0C470.8 421.7 475.7 424.8 480.0 428.0C484.3 431.2 490.7 434.8 494.0 437.0C497.3 439.2 498.3 439.5 500.0 441.0C501.7 442.5 503.5 444.3 504.0 446.0C504.5 447.7 503.2 450.2 503.0 451.0M520.0 405.0C521.0 405.8 524.0 409.2 526.0 410.0C528.0 410.8 533.3 407.5 532.0 410.0C530.7 412.5 522.8 420.0 518.0 425.0C513.2 430.0 505.5 437.5 503.0 440.0M522.0 407.0C524.0 407.5 529.3 407.8 534.0 410.0C538.7 412.2 546.9 417.7 550.0 420.0C553.1 422.3 552.0 423.0 552.4 423.6M505.0 411.0C505.2 412.0 504.8 416.0 506.0 417.0C507.2 418.0 511.2 417.7 512.0 417.0C512.8 416.3 510.0 412.5 511.0 413.0C512.0 413.5 516.8 418.8 518.0 420.0M570.0 388.0C573.3 387.0 581.3 387.3 586.0 388.0C590.7 388.7 595.7 390.0 598.0 392.0C600.3 394.0 600.7 396.0 600.0 400.0C599.3 404.0 596.3 411.0 594.0 416.0C591.7 421.0 588.0 426.5 586.0 430.0C584.0 433.5 584.7 436.3 582.0 437.0C579.3 437.7 574.0 435.3 570.0 434.0C566.0 432.7 561.2 430.5 558.0 429.0C554.8 427.5 552.0 427.2 551.0 425.0C550.0 422.8 550.5 419.5 552.0 416.0C553.5 412.5 557.7 407.7 560.0 404.0C562.3 400.3 564.3 396.7 566.0 394.0C567.7 391.3 566.7 389.0 570.0 388.0zM568.0 394.0C570.4 394.3 577.7 395.1 582.5 395.6C587.3 396.1 594.6 396.6 597.0 396.8M565.0 399.0C567.8 399.3 576.0 400.1 581.5 400.6C587.0 401.1 595.2 401.6 598.0 401.8M562.4 404.0C565.2 404.3 573.6 405.1 579.2 405.6C584.8 406.1 593.2 406.6 596.0 406.8M560.0 409.0C562.8 409.3 571.0 410.1 576.5 410.6C582.0 411.1 590.2 411.6 593.0 411.8M557.6 414.0C560.3 414.3 568.4 415.1 573.8 415.6C579.2 416.1 587.3 416.6 590.0 416.8M555.0 419.0C557.6 419.3 565.3 420.1 570.5 420.6C575.7 421.1 583.4 421.6 586.0 421.8M553.0 424.0C555.5 424.3 563.0 425.1 568.0 425.6C573.0 426.1 580.5 426.6 583.0 426.8M558.0 429.6C560.0 429.9 566.0 430.7 570.0 431.2C574.0 431.7 580.0 432.2 582.0 432.4M568.0 435.0C568.2 436.5 570.7 441.2 569.0 444.0C567.3 446.8 562.5 449.0 558.0 452.0C553.5 455.0 547.3 460.0 542.0 462.0C536.7 464.0 530.3 464.2 526.0 464.0C521.7 463.8 519.7 462.7 516.0 461.0C512.3 459.3 506.2 455.7 504.0 454.0C501.8 452.3 503.2 451.5 503.0 451.0M430.0 449.0C432.0 450.2 437.7 454.2 442.0 456.0C446.3 457.8 451.3 459.3 456.0 460.0C460.7 460.7 465.3 460.8 470.0 460.0C474.7 459.2 479.7 457.0 484.0 455.0C488.3 453.0 493.0 450.0 496.0 448.0C499.0 446.0 501.0 443.8 502.0 443.0M498.0 453.0C496.3 454.2 490.7 457.2 488.0 460.0C485.3 462.8 482.8 466.3 482.0 470.0C481.2 473.7 481.7 479.3 483.0 482.0C484.3 484.7 486.5 486.0 490.0 486.0C493.5 486.0 499.3 484.0 504.0 482.0C508.7 480.0 514.3 476.7 518.0 474.0C521.7 471.3 524.7 467.3 526.0 466.0M501.0 457.0C499.7 458.2 495.2 461.2 493.0 464.0C490.8 466.8 488.5 471.3 488.0 474.0C487.5 476.7 488.3 479.0 490.0 480.0C491.7 481.0 494.7 481.0 498.0 480.0C501.3 479.0 506.3 476.0 510.0 474.0C513.7 472.0 518.3 469.0 520.0 468.0M526.0 466.0C528.0 466.0 534.0 463.8 538.0 466.0C542.0 468.2 544.7 478.0 550.0 479.0C555.3 480.0 563.3 475.2 570.0 472.0C576.7 468.8 584.7 463.0 590.0 460.0C595.3 457.0 600.0 455.0 602.0 454.0M534.0 468.0C535.3 469.7 539.0 475.7 542.0 478.0C545.0 480.3 547.3 482.2 552.0 481.6C556.7 481.0 567.0 475.6 570.0 474.4M596.0 445.0C597.0 446.5 599.7 450.8 602.0 454.0C604.3 457.2 607.0 461.0 610.0 464.0C613.0 467.0 616.7 468.7 620.0 472.0C623.3 475.3 626.3 480.3 630.0 484.0C633.7 487.7 636.7 491.3 642.0 494.0C647.3 496.7 658.7 499.0 662.0 500.0M570.0 472.0C572.0 473.0 578.0 476.0 582.0 478.0C586.0 480.0 590.0 482.7 594.0 484.0C598.0 485.3 602.0 486.3 606.0 486.0C610.0 485.7 615.2 483.5 618.0 482.0C620.8 480.5 622.2 477.8 623.0 477.0M594.0 488.0C596.0 488.5 603.8 489.0 606.0 491.0C608.2 493.0 607.3 497.7 607.0 500.0C606.7 502.3 604.5 504.2 604.0 505.0M582.0 438.0C584.3 439.0 591.3 442.5 596.0 444.0C600.7 445.5 604.3 446.2 610.0 447.0C615.7 447.8 623.3 448.5 630.0 449.0C636.7 449.5 644.7 450.0 650.0 450.0C655.3 450.0 660.0 449.2 662.0 449.0M598.0 397.0C600.0 397.2 606.7 396.8 610.0 398.0C613.3 399.2 615.7 401.7 618.0 404.0C620.3 406.3 622.3 409.7 624.0 412.0C625.7 414.3 626.3 416.8 628.0 418.0C629.7 419.2 632.8 419.3 634.0 419.0C635.2 418.7 634.8 416.5 635.0 416.0M596.0 416.0C597.7 416.5 603.0 417.3 606.0 419.0C609.0 420.7 611.8 424.3 614.0 426.0C616.2 427.7 618.3 429.0 619.0 429.0C619.7 429.0 618.2 426.5 618.0 426.0M638.0 406.0C639.3 405.2 643.0 401.5 646.0 401.0C649.0 400.5 653.3 401.8 656.0 403.0C658.7 404.2 661.0 407.2 662.0 408.0M644.0 412.0C644.7 412.8 646.3 416.7 648.0 417.0C649.7 417.3 651.7 413.5 654.0 414.0C656.3 414.5 660.7 419.0 662.0 420.0M600.0 392.0C601.7 390.7 607.0 386.0 610.0 384.0C613.0 382.0 616.7 380.7 618.0 380.0M430.0 466.0C432.0 467.3 437.7 471.3 442.0 474.0C446.3 476.7 451.3 479.3 456.0 482.0C460.7 484.7 466.0 487.0 470.0 490.0C474.0 493.0 475.0 497.8 480.0 500.0C485.0 502.2 496.7 502.5 500.0 503.0M430.0 472.0C432.7 473.7 440.7 478.7 446.0 482.0C451.3 485.3 457.3 488.7 462.0 492.0C466.7 495.3 472.0 500.3 474.0 502.0M536.0 470.0C534.7 471.7 530.3 476.3 528.0 480.0C525.7 483.7 524.3 487.8 522.0 492.0C519.7 496.2 515.3 502.8 514.0 505.0M444.0 456.0C442.3 455.0 437.3 451.3 434.0 450.0C430.7 448.7 427.3 448.0 424.0 448.0C420.7 448.0 416.7 448.8 414.0 450.0C411.3 451.2 408.8 453.2 408.0 455.0C407.2 456.8 407.0 458.8 409.0 461.0C411.0 463.2 416.5 466.1 420.0 468.0C423.5 469.9 428.3 471.7 430.0 472.4M412.0 457.0C414.3 458.3 423.0 463.4 426.0 465.0C429.0 466.6 429.3 466.2 430.0 466.4M514.0 505.0C513.3 506.2 511.7 510.8 510.0 512.4C508.3 514.0 506.0 514.4 504.0 514.4C502.0 514.4 500.7 513.8 498.0 512.4C495.3 511.0 491.0 507.8 488.0 506.0C485.0 504.2 482.3 502.3 480.0 501.6C477.7 500.9 475.0 501.9 474.0 502.0M430.0 449.0C432.3 450.2 439.7 454.3 444.0 456.0C448.3 457.7 454.0 458.5 456.0 459.0M595.0 488.0C596.5 488.5 602.0 489.5 604.0 491.0C606.0 492.5 607.0 494.5 607.0 497.0C607.0 499.5 605.8 503.2 604.0 506.0C602.2 508.8 599.0 511.3 596.0 514.0C593.0 516.7 588.7 519.8 586.0 522.0C583.3 524.2 583.0 526.2 580.0 527.0C577.0 527.8 572.7 527.0 568.0 527.0C563.3 527.0 556.0 526.2 552.0 527.0C548.0 527.8 545.7 530.2 544.0 532.0C542.3 533.8 540.3 535.7 542.0 538.0C543.7 540.3 549.3 543.3 554.0 546.0C558.7 548.7 564.3 553.0 570.0 554.0C575.7 555.0 582.3 553.0 588.0 552.0C593.7 551.0 599.3 549.3 604.0 548.0C608.7 546.7 612.0 546.3 616.0 544.0C620.0 541.7 624.0 536.5 628.0 534.0C632.0 531.5 636.3 530.7 640.0 529.0C643.7 527.3 646.7 525.7 650.0 524.0C653.3 522.3 656.3 520.8 660.0 519.0C663.7 517.2 669.7 514.7 672.0 513.0C674.3 511.3 674.7 510.5 674.0 509.0C673.3 507.5 670.0 505.0 668.0 504.0C666.0 503.0 663.0 503.2 662.0 503.0M577.0 526.0C577.8 527.2 581.0 533.2 582.0 533.0C583.0 532.8 582.8 526.3 583.0 525.0M546.0 535.0C548.0 536.2 553.7 539.7 558.0 542.0C562.3 544.3 567.0 548.3 572.0 549.0C577.0 549.7 582.7 547.2 588.0 546.0C593.3 544.8 599.3 543.3 604.0 542.0C608.7 540.7 612.3 540.0 616.0 538.0C619.7 536.0 622.7 532.2 626.0 530.0C629.3 527.8 632.3 526.8 636.0 525.0C639.7 523.2 644.0 521.8 648.0 519.0C652.0 516.2 657.7 510.7 660.0 508.0C662.3 505.3 661.7 503.8 662.0 503.0M604.0 454.0C605.7 455.7 610.7 460.3 614.0 464.0C617.3 467.7 620.7 472.7 624.0 476.0C627.3 479.3 630.7 481.5 634.0 484.0C637.3 486.5 639.7 488.2 644.0 491.0C648.3 493.8 657.0 499.0 660.0 501.0C663.0 503.0 661.7 502.7 662.0 503.0M622.0 480.0C623.0 481.3 625.7 485.5 628.0 488.0C630.3 490.5 633.7 493.3 636.0 495.0C638.3 496.7 640.8 498.3 642.0 498.0C643.2 497.7 644.7 494.8 643.0 493.0C641.3 491.2 633.8 488.0 632.0 487.0M595.0 486.0C597.2 486.0 603.8 486.7 608.0 486.0C612.2 485.3 617.3 483.7 620.0 482.0C622.7 480.3 623.3 477.0 624.0 476.0M538.0 467.0C540.0 468.8 546.3 476.8 550.0 478.0C553.7 479.2 556.3 475.3 560.0 474.0C563.7 472.7 567.3 472.0 572.0 470.0C576.7 468.0 583.3 464.3 588.0 462.0C592.7 459.7 597.3 457.3 600.0 456.0C602.7 454.7 603.3 454.3 604.0 454.0M572.0 471.0C574.0 472.3 580.2 476.2 584.0 479.0C587.8 481.8 593.2 486.5 595.0 488.0M534.0 470.0C532.7 471.7 528.3 475.7 526.0 480.0C523.7 484.3 521.0 493.3 520.0 496.0M662.0 503.0C664.3 503.2 671.0 503.3 676.0 504.0C681.0 504.7 688.0 506.3 692.0 507.0C696.0 507.7 696.0 508.5 700.0 508.0C704.0 507.5 710.7 505.8 716.0 504.0C721.3 502.2 727.3 499.3 732.0 497.0C736.7 494.7 740.7 492.0 744.0 490.0C747.3 488.0 750.7 485.8 752.0 485.0M702.0 418.0C701.3 420.7 699.3 428.7 698.0 434.0C696.7 439.3 695.0 444.0 694.0 450.0C693.0 456.0 692.5 463.3 692.0 470.0C691.5 476.7 691.3 484.7 691.0 490.0C690.7 495.3 690.0 499.0 690.0 502.0C690.0 505.0 690.8 507.0 691.0 508.0M706.0 420.0C708.3 421.3 716.0 425.7 720.0 428.0C724.0 430.3 727.3 430.7 730.0 434.0C732.7 437.3 734.0 443.3 736.0 448.0C738.0 452.7 740.3 458.0 742.0 462.0C743.7 466.0 745.3 468.3 746.0 472.0C746.7 475.7 746.7 481.0 746.0 484.0C745.3 487.0 742.7 489.0 742.0 490.0M701.2 426.0C702.5 426.2 706.5 427.1 709.2 427.2C711.9 427.3 715.9 426.7 717.2 426.6M700.4 431.0C702.6 430.9 709.3 430.5 713.8 430.6C718.3 430.7 725.0 431.4 727.2 431.6M699.6 436.0C702.3 436.2 710.4 437.1 715.7 437.2C721.1 437.3 729.1 436.7 731.8 436.6M698.9 441.0C701.7 440.9 710.3 440.5 716.0 440.6C721.7 440.7 730.3 441.4 733.2 441.6M698.1 446.0C701.2 446.2 710.3 447.1 716.3 447.2C722.4 447.3 731.5 446.7 734.6 446.6M697.4 451.0C700.6 450.9 710.2 450.5 716.7 450.6C723.1 450.7 732.7 451.4 736.0 451.6M696.6 456.0C700.0 456.2 710.2 457.1 717.0 457.2C723.8 457.3 734.0 456.7 737.4 456.6M695.8 461.0C699.4 460.9 710.1 460.5 717.3 460.6C724.5 460.7 735.2 461.4 738.8 461.6M695.1 466.0C698.8 466.2 710.1 467.1 717.6 467.2C725.1 467.3 736.4 466.7 740.2 466.6M694.3 471.0C698.2 470.9 710.1 470.5 717.9 470.6C725.8 470.7 737.6 471.4 741.6 471.6M693.5 476.0C697.7 476.2 710.0 477.1 718.2 477.2C726.5 477.3 738.8 476.7 743.0 476.6M692.8 481.0C697.1 480.9 710.0 480.5 718.6 480.6C727.2 480.7 740.1 481.4 744.4 481.6M692.0 486.0C696.5 486.2 709.9 487.1 718.8 487.2C727.7 487.3 741.1 486.7 745.6 486.6M690.0 505.0C692.3 505.2 699.0 506.7 704.0 506.0C709.0 505.3 714.7 503.2 720.0 501.0C725.3 498.8 731.3 495.5 736.0 493.0C740.7 490.5 744.3 488.8 748.0 486.0C751.7 483.2 754.7 479.7 758.0 476.0C761.3 472.3 765.3 467.7 768.0 464.0C770.7 460.3 772.3 458.0 774.0 454.0C775.7 450.0 777.2 445.0 778.0 440.0C778.8 435.0 779.3 429.3 779.0 424.0C778.7 418.7 776.2 412.7 776.0 408.0C775.8 403.3 778.0 399.0 778.0 396.0C778.0 393.0 776.3 391.0 776.0 390.0M702.0 417.0C703.7 415.8 708.3 412.8 712.0 410.0C715.7 407.2 720.0 403.0 724.0 400.0C728.0 397.0 732.7 394.0 736.0 392.0C739.3 390.0 742.7 388.7 744.0 388.0M702.0 417.0C702.7 415.2 704.8 409.5 706.0 406.0C707.2 402.5 708.0 398.8 709.0 396.0C710.0 393.2 711.5 390.2 712.0 389.0M718.0 415.0C720.3 416.3 727.0 420.2 732.0 423.0C737.0 425.8 743.3 429.2 748.0 432.0C752.7 434.8 756.7 437.3 760.0 440.0C763.3 442.7 766.5 445.7 768.0 448.0C769.5 450.3 769.7 453.7 769.0 454.0C768.3 454.3 766.2 452.2 764.0 450.0C761.8 447.8 759.0 443.8 756.0 441.0C753.0 438.2 747.7 434.3 746.0 433.0M620.0 448.0C622.7 448.3 630.0 449.8 636.0 450.0C642.0 450.2 650.0 450.0 656.0 449.0C662.0 448.0 667.0 446.2 672.0 444.0C677.0 441.8 681.7 439.0 686.0 436.0C690.3 433.0 695.3 429.0 698.0 426.0C700.7 423.0 701.3 419.3 702.0 418.0M688.0 412.0C687.2 413.0 684.2 415.3 683.0 418.0C681.8 420.7 681.5 424.8 681.0 428.0C680.5 431.2 680.2 435.5 680.0 437.0M620.0 406.0C621.3 405.7 625.0 404.2 628.0 404.0C631.0 403.8 635.0 404.0 638.0 405.0C641.0 406.0 643.3 409.3 646.0 410.0C648.7 410.7 651.0 408.7 654.0 409.0C657.0 409.3 661.0 410.2 664.0 412.0C667.0 413.8 670.5 417.2 672.0 420.0C673.5 422.8 673.7 427.0 673.0 429.0C672.3 431.0 669.5 432.5 668.0 432.0C666.5 431.5 665.3 428.3 664.0 426.0C662.7 423.7 660.7 419.3 660.0 418.0M624.0 410.0C624.7 411.3 626.3 416.5 628.0 418.0C629.7 419.5 632.8 419.5 634.0 419.0C635.2 418.5 634.8 415.7 635.0 415.0M656.0 398.0C658.0 397.8 664.0 397.7 668.0 397.0C672.0 396.3 677.0 394.8 680.0 394.0C683.0 393.2 685.0 392.3 686.0 392.0M620.0 470.0C621.3 471.3 625.0 475.3 628.0 478.0C631.0 480.7 635.0 483.7 638.0 486.0C641.0 488.3 642.3 489.5 646.0 492.0C649.7 494.5 655.7 498.8 660.0 501.0C664.3 503.2 667.0 504.2 672.0 505.0C677.0 505.8 687.0 505.8 690.0 506.0M620.0 478.0C621.0 479.3 624.0 483.3 626.0 486.0C628.0 488.7 629.3 492.0 632.0 494.0C634.7 496.0 640.3 497.3 642.0 498.0M663.0 503.0C661.8 504.2 658.2 508.0 656.0 510.0C653.8 512.0 651.0 514.2 650.0 515.0M722.0 288.0C723.7 289.3 728.3 292.7 732.0 296.0C735.7 299.3 739.7 303.3 744.0 308.0C748.3 312.7 754.0 318.7 758.0 324.0C762.0 329.3 765.2 334.7 768.0 340.0C770.8 345.3 773.3 350.7 775.0 356.0C776.7 361.3 777.7 367.0 778.0 372.0C778.3 377.0 776.8 381.7 777.0 386.0C777.2 390.3 778.7 396.0 779.0 398.0M719.0 295.0C719.8 297.5 723.0 304.8 724.0 310.0C725.0 315.2 725.3 320.7 725.0 326.0C724.7 331.3 723.2 337.3 722.0 342.0C720.8 346.7 719.2 350.7 718.0 354.0C716.8 357.3 715.5 360.7 715.0 362.0M744.0 313.0C745.0 314.5 748.2 318.5 750.0 322.0C751.8 325.5 753.7 330.0 755.0 334.0C756.3 338.0 757.8 342.7 758.0 346.0C758.2 349.3 756.3 352.7 756.0 354.0M620.0 320.0C621.3 319.2 624.7 316.5 628.0 315.0C631.3 313.5 636.3 311.8 640.0 311.0C643.7 310.2 648.3 310.2 650.0 310.0M622.0 329.0C624.0 329.8 630.3 331.8 634.0 334.0C637.7 336.2 641.7 339.3 644.0 342.0C646.3 344.7 646.3 347.0 648.0 350.0C649.7 353.0 652.0 356.3 654.0 360.0C656.0 363.7 658.7 369.7 660.0 372.0C661.3 374.3 662.3 372.0 662.0 374.0C661.7 376.0 659.7 380.5 658.0 384.0C656.3 387.5 653.0 393.2 652.0 395.0M663.0 361.0C663.3 359.2 663.5 353.8 665.0 350.0C666.5 346.2 669.2 341.2 672.0 338.0C674.8 334.8 678.7 332.7 682.0 331.0C685.3 329.3 689.9 327.8 692.0 327.6C694.1 327.4 695.1 328.8 694.4 330.0C693.7 331.2 690.4 333.0 688.0 335.0C685.6 337.0 681.8 340.2 680.0 342.0C678.2 343.8 677.5 345.3 677.0 346.0M663.0 362.0C665.2 361.5 671.2 359.5 676.0 359.0C680.8 358.5 687.3 358.7 692.0 359.0C696.7 359.3 700.0 360.2 704.0 361.0C708.0 361.8 712.7 362.5 716.0 364.0C719.3 365.5 721.7 367.0 724.0 370.0C726.3 373.0 728.2 378.3 730.0 382.0C731.8 385.7 733.7 389.7 735.0 392.0C736.3 394.3 737.5 395.3 738.0 396.0M665.0 374.0C666.7 372.7 672.2 370.5 676.0 369.0C679.8 367.5 684.8 366.0 688.0 365.0C691.2 364.0 694.0 362.8 695.0 363.0C696.0 363.2 695.8 364.8 694.0 366.0C692.2 367.2 687.3 368.7 684.0 370.0C680.7 371.3 677.0 372.8 674.0 374.0C671.0 375.2 667.5 377.0 666.0 377.0C664.5 377.0 663.3 375.3 665.0 374.0zM724.0 372.0C723.0 373.0 720.0 375.3 718.0 378.0C716.0 380.7 713.7 385.2 712.0 388.0C710.3 390.8 708.7 393.8 708.0 395.0M751.0 370.0C750.5 371.3 749.2 375.7 748.0 378.0C746.8 380.3 744.7 383.0 744.0 384.0M768.0 372.0C766.7 372.5 762.7 373.7 760.0 375.0C757.3 376.3 754.7 378.0 752.0 380.0C749.3 382.0 746.7 384.8 744.0 387.0C741.3 389.2 737.3 392.0 736.0 393.0M660.0 389.0C661.7 388.7 668.0 389.7 672.0 390.0C676.0 390.3 681.7 390.5 684.0 391.0C686.3 391.5 687.3 392.7 686.0 393.0C684.7 393.3 680.0 393.2 676.0 393.0C672.0 392.8 664.7 392.3 662.0 391.6C659.3 390.9 658.3 389.3 660.0 389.0z" stroke="#201f1b" stroke-width="4.8"/><path d="M484.0 160.0C484.8 159.2 485.7 158.3 490.0 157.0C494.3 155.7 501.7 153.8 510.0 152.0C518.3 150.2 530.0 147.8 540.0 146.0C550.0 144.2 560.7 142.2 570.0 141.0C579.3 139.8 589.0 138.9 596.0 138.6C603.0 138.3 608.2 138.5 612.0 139.4C615.8 140.3 618.0 142.2 619.0 144.0C620.0 145.8 619.8 148.3 618.0 150.0C616.2 151.7 613.7 152.7 608.0 154.0C602.3 155.3 593.7 156.9 584.0 158.0C574.3 159.1 560.7 159.9 550.0 160.6C539.3 161.3 529.0 161.7 520.0 162.0C511.0 162.3 501.8 162.6 496.0 162.6C490.2 162.6 487.0 162.4 485.0 162.0C483.0 161.6 483.2 160.8 484.0 160.0zM540.0 145.0C537.7 141.3 530.5 130.2 526.0 123.0C521.5 115.8 514.9 106.1 512.8 102.0C510.7 97.9 512.5 99.4 513.2 98.6C513.9 97.8 515.7 97.4 517.0 97.4C518.3 97.4 516.2 95.7 521.0 98.6C525.8 101.5 539.5 110.3 546.0 115.0C552.5 119.7 555.0 123.1 560.0 127.0C565.0 130.9 573.3 136.7 576.0 138.6M546.0 115.0C546.5 114.7 547.7 113.3 549.0 113.0C550.3 112.7 552.4 112.7 553.6 113.4C554.8 114.1 555.8 116.0 556.0 117.0C556.2 118.0 555.2 119.0 555.0 119.4M523.6 119.4C523.2 119.7 521.3 120.2 521.0 121.0C520.7 121.8 521.0 123.4 521.6 124.0C522.2 124.6 523.9 124.5 524.4 124.6M486.0 156.0C485.2 154.0 481.7 146.7 481.0 144.0C480.3 141.3 481.3 140.8 482.0 140.0C482.7 139.2 481.5 137.4 485.0 139.4C488.5 141.4 500.0 149.9 503.0 152.0M488.0 163.0C487.9 165.9 487.3 177.4 487.6 180.6C487.9 183.8 489.1 181.9 490.0 182.0C490.9 182.1 490.7 184.0 493.0 181.0C495.3 178.0 502.2 166.8 504.0 164.0M541.6 162.0C541.2 164.7 540.1 169.8 539.0 178.0C537.9 186.2 535.5 204.9 535.0 211.0C534.5 217.1 535.2 213.7 536.0 214.4C536.8 215.1 538.7 215.4 540.0 215.2C541.3 215.0 540.7 216.9 544.0 213.0C547.3 209.1 554.1 200.8 560.0 192.0C565.9 183.2 576.3 165.3 579.6 160.0M537.6 184.4C537.1 184.7 534.9 185.1 534.4 186.0C533.9 186.9 534.0 188.8 534.4 189.6C534.8 190.4 536.6 190.8 537.0 191.0M564.0 182.4C564.8 182.3 568.0 181.4 569.0 182.0C570.0 182.6 570.2 184.8 570.0 186.0C569.8 187.2 569.5 188.3 568.0 189.0C566.5 189.7 562.2 189.8 561.0 190.0M640.0 193.0C639.2 192.0 636.1 189.3 635.0 187.0C633.9 184.7 633.6 181.8 633.5 179.0C633.4 176.2 633.6 172.2 634.5 170.0C635.4 167.8 637.1 166.4 639.0 166.0C640.9 165.6 643.7 166.3 646.0 167.5C648.3 168.7 650.7 170.9 653.0 173.0C655.3 175.1 658.0 177.8 660.0 180.0C662.0 182.2 663.3 183.8 665.0 186.0C666.7 188.2 668.2 190.3 670.0 193.0C671.8 195.7 674.0 199.0 676.0 202.0C678.0 205.0 679.7 207.5 682.0 211.0C684.3 214.5 686.7 217.8 690.0 223.0C693.3 228.2 698.0 235.7 702.0 242.0C706.0 248.3 710.3 255.0 714.0 261.0C717.7 267.0 722.3 275.2 724.0 278.0M639.0 184.0C638.9 183.0 638.2 179.8 638.5 178.0C638.8 176.2 639.4 174.2 640.5 173.5C641.6 172.8 643.2 173.1 645.0 174.0C646.8 174.9 649.0 177.0 651.0 179.0C653.0 181.0 655.0 183.5 657.0 186.0C659.0 188.5 661.0 191.2 663.0 194.0C665.0 196.8 667.0 200.0 669.0 203.0C671.0 206.0 672.7 208.5 675.0 212.0C677.3 215.5 679.5 219.0 683.0 224.0C686.5 229.0 691.8 235.8 696.0 242.0C700.2 248.2 704.2 254.8 708.0 261.0C711.8 267.2 717.2 276.0 719.0 279.0M640.0 193.0C640.5 192.8 641.3 192.3 643.0 192.0C644.7 191.7 648.0 191.0 650.0 191.0C652.0 191.0 653.3 191.2 655.0 192.0C656.7 192.8 658.3 194.3 660.0 196.0C661.7 197.7 663.3 199.8 665.0 202.0C666.7 204.2 668.0 206.0 670.0 209.0C672.0 212.0 673.7 214.5 677.0 220.0C680.3 225.5 685.8 235.2 690.0 242.0C694.2 248.8 698.2 254.7 702.0 261.0C705.8 267.3 711.2 276.8 713.0 280.0M666.0 187.0C667.7 186.5 672.0 185.2 676.0 184.0C680.0 182.8 684.8 180.6 690.0 179.5C695.2 178.4 703.7 177.7 707.0 177.5C710.3 177.3 708.5 177.4 710.0 178.5C711.5 179.6 713.7 181.8 716.0 184.0C718.3 186.2 721.7 189.3 724.0 192.0C726.3 194.7 728.0 197.2 730.0 200.0C732.0 202.8 734.2 206.3 736.0 209.0C737.8 211.7 739.6 212.5 741.0 216.0C742.4 219.5 744.1 226.3 744.4 230.0C744.7 233.7 746.4 235.0 743.0 238.0C739.6 241.0 727.8 246.0 724.0 248.0C720.2 250.0 721.0 249.3 720.0 250.0C719.0 250.7 719.5 251.3 718.0 252.0C716.5 252.7 712.2 254.0 711.0 254.4M676.0 187.0C677.0 187.7 679.7 188.8 682.0 191.0C684.3 193.2 687.5 197.0 690.0 200.0C692.5 203.0 694.8 206.2 697.0 209.0C699.2 211.8 699.8 212.5 703.0 217.0C706.2 221.5 712.8 231.2 716.0 236.0C719.2 240.8 721.3 243.7 722.0 246.0C722.7 248.3 720.3 249.3 720.0 250.0M696.0 224.5L704.0 221.5M701.0 236.5L712.0 233.5M644.0 192.0C643.0 192.7 640.0 194.2 638.0 196.0C636.0 197.8 633.8 200.3 632.0 203.0C630.2 205.7 628.8 208.8 627.0 212.0C625.2 215.2 622.8 219.0 621.0 222.0C619.2 225.0 617.2 227.9 616.0 230.0C614.8 232.1 613.6 233.1 613.6 234.4C613.6 235.7 614.9 237.2 616.0 238.0C617.1 238.8 617.8 239.0 620.0 239.4C622.2 239.8 627.5 240.2 629.0 240.4M630.4 238.4C630.8 238.7 632.7 238.7 633.0 240.0C633.3 241.3 632.8 244.3 632.4 246.0C632.0 247.7 631.8 249.5 630.4 250.4C629.0 251.3 625.8 251.6 624.0 251.6C622.2 251.6 620.3 250.6 619.6 250.4M618.0 243.6C618.3 244.5 619.6 247.2 619.6 249.0C619.6 250.8 618.3 252.6 618.0 254.4C617.7 256.2 617.3 258.4 617.6 260.0C617.9 261.6 618.3 262.9 620.0 264.0C621.7 265.1 624.7 265.7 628.0 266.4C631.3 267.1 637.2 267.5 640.0 268.0C642.8 268.5 644.0 268.3 645.0 269.6C646.0 270.9 645.8 274.9 646.0 276.0M634.0 221.0C635.1 219.5 638.5 219.8 640.0 220.0C641.5 220.2 642.5 220.7 643.0 222.0C643.5 223.3 643.3 226.0 643.0 228.0C642.7 230.0 642.0 233.2 641.0 234.0C640.0 234.8 638.2 233.8 637.0 233.0C635.8 232.2 634.0 231.0 633.5 229.0C633.0 227.0 632.9 222.5 634.0 221.0zM635.0 225.5L642.0 224.8M643.0 194.5C641.7 196.2 637.5 201.4 635.0 205.0C632.5 208.6 630.2 212.5 628.0 216.0C625.8 219.5 623.8 223.0 622.0 226.0C620.2 229.0 618.2 231.8 617.0 234.0C615.8 236.2 615.3 238.2 615.0 239.0M644.0 221.0C644.0 222.5 643.8 227.3 644.0 230.0C644.2 232.7 644.2 234.8 645.0 237.0C645.8 239.2 647.7 241.3 649.0 243.0C650.3 244.7 652.3 246.3 653.0 247.0M658.0 199.0C657.8 200.5 657.8 204.5 657.0 208.0C656.2 211.5 654.2 216.3 653.0 220.0C651.8 223.7 650.2 226.7 650.0 230.0C649.8 233.3 650.7 236.7 652.0 240.0C653.3 243.3 656.3 246.7 658.0 250.0C659.7 253.3 661.0 256.7 662.0 260.0C663.0 263.3 662.8 267.0 664.0 270.0C665.2 273.0 667.0 276.2 669.0 278.0C671.0 279.8 674.8 280.5 676.0 281.0M648.0 196.0C647.3 197.3 645.0 201.0 644.0 204.0C643.0 207.0 642.5 211.3 642.0 214.0C641.5 216.7 641.2 219.0 641.0 220.0M651.0 198.0C650.5 199.7 648.8 204.3 648.0 208.0C647.2 211.7 646.8 216.0 646.4 220.0C646.0 224.0 645.3 228.3 645.6 232.0C645.9 235.7 646.6 239.0 648.0 242.0C649.4 245.0 653.0 248.7 654.0 250.0M663.0 222.0C663.2 224.0 663.7 230.0 664.0 234.0C664.3 238.0 664.7 241.7 665.0 246.0C665.3 250.3 665.5 256.0 666.0 260.0C666.5 264.0 666.7 267.0 668.0 270.0C669.3 273.0 673.0 276.7 674.0 278.0M678.0 229.0C678.5 230.5 680.7 234.5 681.0 238.0C681.3 241.5 680.0 245.7 680.0 250.0C680.0 254.3 680.2 260.0 681.0 264.0C681.8 268.0 683.2 271.5 685.0 274.0C686.8 276.5 690.8 278.2 692.0 279.0M686.0 253.0C685.5 254.5 683.2 259.2 683.0 262.0C682.8 264.8 683.8 267.5 685.0 270.0C686.2 272.5 689.2 275.8 690.0 277.0M613.6 234.4C612.5 236.0 609.1 241.1 607.0 244.0C604.9 246.9 602.7 249.2 601.0 252.0C599.3 254.8 599.2 258.3 597.0 261.0C594.8 263.7 592.2 265.9 588.0 268.4C583.8 270.9 576.7 274.2 572.0 276.0C567.3 277.8 562.0 278.8 560.0 279.4M610.0 259.0C609.0 259.5 606.3 260.2 604.0 262.0C601.7 263.8 598.3 267.0 596.0 270.0C593.7 273.0 592.0 277.0 590.0 280.0C588.0 283.0 585.7 285.3 584.0 288.0C582.3 290.7 580.7 294.7 580.0 296.0M618.0 264.0C617.0 265.0 614.0 267.7 612.0 270.0C610.0 272.3 608.3 275.0 606.0 278.0C603.7 281.0 600.7 285.0 598.0 288.0C595.3 291.0 592.7 293.2 590.0 296.0C587.3 298.8 583.3 303.5 582.0 305.0M630.0 274.0C629.0 275.0 626.0 277.7 624.0 280.0C622.0 282.3 619.7 285.0 618.0 288.0C616.3 291.0 615.3 295.2 614.0 298.0C612.7 300.8 610.7 303.8 610.0 305.0M646.0 276.0C645.0 277.3 641.5 281.3 640.0 284.0C638.5 286.7 637.3 289.0 637.0 292.0C636.7 295.0 635.8 300.0 638.0 302.0C640.2 304.0 644.3 304.3 650.0 304.0C655.7 303.7 664.3 301.2 672.0 300.0C679.7 298.8 688.7 297.8 696.0 297.0C703.3 296.2 710.8 295.5 716.0 295.0C721.2 294.5 725.2 294.2 727.0 294.0M640.0 284.0C641.7 284.3 645.3 286.0 650.0 286.0C654.7 286.0 662.3 284.8 668.0 284.0C673.7 283.2 678.7 281.7 684.0 281.0C689.3 280.3 694.7 279.8 700.0 280.0C705.3 280.2 712.0 281.0 716.0 282.0C720.0 283.0 722.7 285.3 724.0 286.0M645.0 286.4L643.4 302.4M650.4 286.0L648.8 301.8M655.8 285.8L654.2 301.2M661.2 285.4L659.6 300.6M666.6 285.2L665.0 300.0M672.0 284.8L670.4 299.6M677.4 284.6L675.8 299.0M682.8 284.2L681.2 298.4M688.2 284.0L686.6 297.8M693.6 283.6L692.0 297.2M699.0 283.4L697.4 296.8M704.4 283.0L702.8 296.2M709.8 282.8L708.2 295.6M715.2 282.4L713.6 295.0M720.6 282.2L719.0 294.4M376.0 273.0C375.0 273.3 372.3 274.2 370.0 275.0C367.7 275.8 365.3 277.7 362.0 278.0C358.7 278.3 354.0 278.0 350.0 277.0C346.0 276.0 341.3 273.8 338.0 272.0C334.7 270.2 331.5 268.0 330.0 266.0C328.5 264.0 328.3 261.8 329.0 260.0C329.7 258.2 331.5 256.4 334.0 255.0C336.5 253.6 340.3 251.6 344.0 251.6C347.7 251.6 352.0 254.3 356.0 255.0C360.0 255.7 364.7 255.2 368.0 256.0C371.3 256.8 374.0 258.3 376.0 260.0C378.0 261.7 378.0 263.8 380.0 266.0C382.0 268.2 384.7 271.0 388.0 273.0C391.3 275.0 395.7 277.2 400.0 278.0C404.3 278.8 411.7 278.0 414.0 278.0M332.0 260.0C333.3 259.5 337.5 257.3 340.0 257.0C342.5 256.7 345.8 258.2 347.0 258.4M336.0 265.6C337.7 265.1 342.8 262.8 346.0 262.4C349.2 262.0 353.5 263.1 355.0 263.2M342.0 270.4C344.0 269.9 350.0 267.8 354.0 267.4C358.0 267.0 363.3 268.2 366.0 268.0C368.7 267.8 369.8 267.0 370.0 266.0C370.2 265.0 369.0 263.0 367.0 262.0C365.0 261.0 359.5 260.3 358.0 260.0M350.0 273.2C352.0 273.0 358.5 272.5 362.0 272.2C365.5 271.9 369.5 271.4 371.0 271.2M338.0 273.0C340.0 274.0 345.7 277.5 350.0 279.0C354.3 280.5 360.7 280.5 364.0 282.0C367.3 283.5 367.0 286.7 370.0 288.0C373.0 289.3 379.3 289.7 382.0 290.0C384.7 290.3 385.3 290.0 386.0 290.0M394.0 280.0L404.0 283.2M396.0 293.0C397.7 293.2 402.7 293.2 406.0 294.0C409.3 294.8 414.3 297.3 416.0 298.0M364.0 282.0C366.0 283.2 371.7 287.0 376.0 289.0C380.3 291.0 385.3 292.2 390.0 294.0C394.7 295.8 400.2 298.2 404.0 300.0C407.8 301.8 411.2 302.3 413.0 305.0C414.8 307.7 414.2 313.3 415.0 316.0C415.8 318.7 417.5 320.2 418.0 321.0M413.0 278.0C415.7 276.3 426.8 277.8 434.0 278.0C441.2 278.2 451.8 277.3 456.0 279.0C460.2 280.7 458.3 284.2 459.0 288.0C459.7 291.8 460.2 297.3 460.0 302.0C459.8 306.7 458.5 312.3 458.0 316.0C457.5 319.7 458.3 322.5 457.0 324.0C455.7 325.5 453.8 325.0 450.0 325.0C446.2 325.0 439.3 324.5 434.0 324.0C428.7 323.5 421.2 323.0 418.0 322.0C414.8 321.0 415.2 320.0 415.0 318.0C414.8 316.0 416.3 313.0 417.0 310.0C417.7 307.0 418.8 303.7 419.0 300.0C419.2 296.3 419.0 291.7 418.0 288.0C417.0 284.3 410.3 279.7 413.0 278.0zM420.4 283.0C423.3 283.1 432.7 283.4 438.0 283.6C443.3 283.8 450.0 283.9 452.4 284.0M419.2 288.0C422.3 288.1 432.3 288.4 438.0 288.6C443.7 288.8 451.0 288.9 453.6 289.0M420.4 293.0C423.3 293.1 432.3 293.4 438.0 293.6C443.7 293.8 452.0 293.9 454.8 294.0M419.2 298.0C422.3 298.1 432.5 298.4 438.0 298.6C443.5 298.8 450.0 298.9 452.4 299.0M420.4 302.4C423.3 302.5 432.5 302.8 438.0 303.0C443.5 303.2 451.0 303.3 453.6 303.4M419.2 307.2C422.3 307.3 432.1 307.6 438.0 307.8C443.9 308.0 452.0 308.1 454.8 308.2M420.4 312.0C423.3 312.1 432.7 312.4 438.0 312.6C443.3 312.8 450.0 312.9 452.4 313.0M419.2 316.4C422.3 316.5 432.3 316.8 438.0 317.0C443.7 317.2 451.0 317.3 453.6 317.4M420.4 320.4C423.3 320.5 432.3 320.8 438.0 321.0C443.7 321.2 452.0 321.3 454.8 321.4M458.0 282.0C460.0 282.2 465.7 282.9 470.0 283.0C474.3 283.1 479.7 282.1 484.0 282.4C488.3 282.7 492.7 284.9 496.0 285.0C499.3 285.1 500.3 282.8 504.0 283.0C507.7 283.2 513.7 285.7 518.0 286.0C522.3 286.3 526.0 285.3 530.0 285.0C534.0 284.7 537.0 284.9 542.0 284.0C547.0 283.1 557.0 280.3 560.0 279.6M478.0 289.0C480.0 290.2 486.3 293.3 490.0 296.0C493.7 298.7 497.5 302.5 500.0 305.0C502.5 307.5 504.2 310.0 505.0 311.0M519.0 287.0C517.2 287.5 510.2 288.5 508.0 290.0C505.8 291.5 505.0 294.0 506.0 296.0C507.0 298.0 510.7 299.7 514.0 302.0C517.3 304.3 521.3 307.2 526.0 310.0C530.7 312.8 539.3 317.5 542.0 319.0M457.0 325.0C458.8 325.5 464.8 326.5 468.0 328.0C471.2 329.5 473.7 333.3 476.0 334.0C478.3 334.7 480.0 333.0 482.0 332.0C484.0 331.0 486.3 328.0 488.0 328.0C489.7 328.0 491.0 330.2 492.0 332.0C493.0 333.8 492.7 338.7 494.0 339.0C495.3 339.3 497.7 336.0 500.0 334.0C502.3 332.0 506.0 327.7 508.0 327.0C510.0 326.3 510.7 328.7 512.0 330.0C513.3 331.3 513.0 334.0 516.0 335.0C519.0 336.0 525.7 335.5 530.0 336.0C534.3 336.5 540.0 337.7 542.0 338.0M310.0 354.0C309.8 351.7 309.0 345.3 309.0 340.0C309.0 334.7 309.0 327.7 310.0 322.0C311.0 316.3 313.0 310.3 315.0 306.0C317.0 301.7 320.5 297.3 322.0 296.0C323.5 294.7 323.8 295.7 324.0 298.0C324.2 300.3 323.7 305.3 323.0 310.0C322.3 314.7 321.0 320.7 320.0 326.0C319.0 331.3 317.8 337.0 317.0 342.0C316.2 347.0 315.3 353.7 315.0 356.0M320.0 354.0C321.3 352.3 324.7 348.7 328.0 344.0C331.3 339.3 336.3 332.0 340.0 326.0C343.7 320.0 347.2 313.7 350.0 308.0C352.8 302.3 355.3 295.8 357.0 292.0C358.7 288.2 359.3 285.0 360.0 285.0C360.7 285.0 361.3 288.2 361.0 292.0C360.7 295.8 359.8 302.3 358.0 308.0C356.2 313.7 353.0 320.3 350.0 326.0C347.0 331.7 343.7 337.0 340.0 342.0C336.3 347.0 330.0 353.7 328.0 356.0M298.0 352.0C297.3 350.3 294.3 345.3 294.0 342.0C293.7 338.7 295.0 334.2 296.0 332.0C297.0 329.8 298.7 328.7 300.0 329.0C301.3 329.3 303.0 331.5 304.0 334.0C305.0 336.5 305.3 340.7 306.0 344.0C306.7 347.3 307.7 352.3 308.0 354.0M318.0 352.0C318.3 349.7 319.0 342.0 320.0 338.0C321.0 334.0 322.7 330.2 324.0 328.0C325.3 325.8 327.3 324.3 328.0 325.0C328.7 325.7 328.5 329.2 328.0 332.0C327.5 334.8 326.0 338.3 325.0 342.0C324.0 345.7 322.5 352.0 322.0 354.0M326.0 354.0C329.0 352.3 337.7 347.0 344.0 344.0C350.3 341.0 357.3 338.2 364.0 336.0C370.7 333.8 378.0 332.1 384.0 331.0C390.0 329.9 397.0 329.1 400.0 329.6C403.0 330.1 404.0 332.8 402.0 334.0C400.0 335.2 393.7 335.5 388.0 337.0C382.3 338.5 374.7 340.8 368.0 343.0C361.3 345.2 354.3 347.5 348.0 350.0C341.7 352.5 333.0 356.7 330.0 358.0M320.0 364.0C322.0 363.3 327.7 360.8 332.0 360.0C336.3 359.2 342.0 358.8 346.0 359.0C350.0 359.2 355.0 360.0 356.0 361.0C357.0 362.0 354.7 364.2 352.0 365.0C349.3 365.8 344.3 365.5 340.0 366.0C335.7 366.5 328.3 367.7 326.0 368.0M314.0 372.0C316.3 371.8 322.3 371.3 328.0 371.0C333.7 370.7 341.7 370.0 348.0 370.0C354.3 370.0 363.3 370.0 366.0 371.0C368.7 372.0 367.0 375.0 364.0 376.0C361.0 377.0 353.7 377.0 348.0 377.0C342.3 377.0 335.3 376.3 330.0 376.0C324.7 375.7 318.3 375.2 316.0 375.0M282.0 351.0C283.8 350.5 289.3 350.7 294.0 352.0C298.7 353.3 304.3 355.8 310.0 359.0C315.7 362.2 323.2 367.2 328.0 371.0C332.8 374.8 337.3 379.5 339.0 382.0C340.7 384.5 340.2 385.5 338.0 386.0C335.8 386.5 331.0 386.8 326.0 385.0C321.0 383.2 313.7 378.5 308.0 375.0C302.3 371.5 296.2 367.3 292.0 364.0C287.8 360.7 284.7 357.2 283.0 355.0C281.3 352.8 280.2 351.5 282.0 351.0zM290.0 357.0C292.7 358.3 300.7 362.0 306.0 365.0C311.3 368.0 317.3 371.8 322.0 375.0C326.7 378.2 332.0 382.5 334.0 384.0M282.4 351.4C280.3 354.3 273.9 363.2 270.0 369.0C266.1 374.8 261.7 381.7 259.0 386.0C256.3 390.3 253.9 392.2 253.6 394.6C253.3 397.0 256.4 399.6 257.0 400.6M218.0 379.4C220.1 379.7 225.7 381.9 230.0 384.0C234.3 386.1 239.7 389.2 244.0 392.0C248.3 394.8 252.0 398.0 256.0 401.0C260.0 404.0 264.0 407.7 268.0 410.0C272.0 412.3 276.7 413.5 280.0 414.6C283.3 415.7 286.7 415.7 288.0 416.6C289.3 417.5 288.9 419.1 287.6 419.8C286.3 420.5 283.3 421.2 280.0 420.6C276.7 420.0 272.3 418.4 268.0 416.0C263.7 413.6 258.3 409.3 254.0 406.0C249.7 402.7 246.3 399.2 242.0 396.0C237.7 392.8 232.1 389.3 228.0 387.0C223.9 384.7 219.3 383.3 217.6 382.0C215.9 380.7 215.9 379.1 218.0 379.4zM334.0 386.0C331.7 388.2 325.3 394.5 320.0 399.0C314.7 403.5 305.9 409.8 302.0 413.0C298.1 416.2 296.7 416.6 296.4 418.0C296.1 419.4 297.4 420.2 300.0 421.4C302.6 422.6 307.3 423.6 312.0 425.0C316.7 426.4 325.7 429.2 328.4 430.0M457.0 325.0C458.5 325.7 462.8 327.7 466.0 329.0C469.2 330.3 473.0 333.0 476.0 333.0C479.0 333.0 481.7 329.8 484.0 329.0C486.3 328.2 488.0 326.5 490.0 328.0C492.0 329.5 494.0 337.2 496.0 338.0C498.0 338.8 499.7 334.8 502.0 333.0C504.3 331.2 508.2 327.0 510.0 327.0C511.8 327.0 511.7 331.5 513.0 333.0C514.3 334.5 514.5 335.0 518.0 336.0C521.5 337.0 528.0 338.1 534.0 339.0C540.0 339.9 548.0 340.9 554.0 341.6C560.0 342.3 565.0 342.7 570.0 343.0C575.0 343.3 581.7 343.5 584.0 343.6M457.0 331.0C459.2 331.7 469.8 333.5 470.0 335.0C470.2 336.5 457.7 338.7 458.0 340.0C458.3 341.3 472.2 341.8 472.0 343.0C471.8 344.2 457.3 345.8 457.0 347.0C456.7 348.2 469.8 348.8 470.0 350.0C470.2 351.2 458.0 352.7 458.0 354.0C458.0 355.3 466.3 356.8 470.0 358.0C473.7 359.2 480.0 359.8 480.0 361.0C480.0 362.2 471.3 363.7 470.0 365.0C468.7 366.3 469.7 368.5 472.0 369.0C474.3 369.5 481.3 368.3 484.0 368.0C486.7 367.7 487.3 367.2 488.0 367.0M488.0 368.0C489.3 367.7 493.0 365.7 496.0 366.0C499.0 366.3 503.7 370.5 506.0 370.0C508.3 369.5 508.3 363.8 510.0 363.0C511.7 362.2 513.7 363.8 516.0 365.0C518.3 366.2 520.7 369.3 524.0 370.0C527.3 370.7 532.5 368.8 536.0 369.0C539.5 369.2 542.7 369.5 545.0 371.0C547.3 372.5 549.2 376.8 550.0 378.0M519.0 342.0C520.2 342.8 526.5 345.8 526.0 347.0C525.5 348.2 515.3 348.5 516.0 349.0C516.7 349.5 525.7 349.5 530.0 350.0C534.3 350.5 543.0 350.8 542.0 352.0C541.0 353.2 528.0 355.8 524.0 357.0C520.0 358.2 517.0 358.5 518.0 359.0C519.0 359.5 526.7 359.3 530.0 360.0C533.3 360.7 535.5 361.8 538.0 363.0C540.5 364.2 543.8 366.3 545.0 367.0M478.0 291.0C480.0 292.2 486.3 295.5 490.0 298.0C493.7 300.5 497.5 303.8 500.0 306.0C502.5 308.2 504.2 310.2 505.0 311.0M506.0 295.0C508.0 296.8 513.7 302.5 518.0 306.0C522.3 309.5 527.8 313.3 532.0 316.0C536.2 318.7 541.2 321.0 543.0 322.0M578.0 290.0C576.7 291.3 573.0 295.3 570.0 298.0C567.0 300.7 562.5 303.3 560.0 306.0C557.5 308.7 556.0 311.3 555.0 314.0C554.0 316.7 554.3 319.7 554.0 322.0C553.7 324.3 552.3 326.5 553.0 328.0C553.7 329.5 555.2 330.7 558.0 331.0C560.8 331.3 566.0 330.5 570.0 330.0C574.0 329.5 579.0 329.2 582.0 328.0C585.0 326.8 586.7 324.3 588.0 323.0C589.3 321.7 591.0 320.5 590.0 320.0C589.0 319.5 584.3 319.3 582.0 320.0C579.7 320.7 578.3 323.0 576.0 324.0C573.7 325.0 570.0 326.3 568.0 326.0C566.0 325.7 563.7 324.0 564.0 322.0C564.3 320.0 567.3 316.7 570.0 314.0C572.7 311.3 577.0 308.3 580.0 306.0C583.0 303.7 585.7 302.0 588.0 300.0C590.3 298.0 593.0 295.0 594.0 294.0M560.0 320.0C561.3 318.7 565.0 314.7 568.0 312.0C571.0 309.3 576.3 305.3 578.0 304.0M592.0 314.0C593.7 313.3 598.7 311.7 602.0 310.0C605.3 308.3 609.0 307.3 612.0 304.0C615.0 300.7 618.7 292.3 620.0 290.0M596.0 320.0C597.7 319.8 602.7 320.0 606.0 319.0C609.3 318.0 612.7 316.8 616.0 314.0C619.3 311.2 623.7 306.0 626.0 302.0C628.3 298.0 629.3 292.0 630.0 290.0M594.0 320.0C594.5 322.0 595.8 330.3 597.0 332.0C598.2 333.7 600.5 331.8 601.0 330.0C601.5 328.2 600.2 322.5 600.0 321.0M550.0 378.0C552.7 375.3 560.7 367.2 566.0 362.0C571.3 356.8 577.0 351.3 582.0 347.0C587.0 342.7 591.3 338.7 596.0 336.0C600.7 333.3 605.0 332.0 610.0 331.0C615.0 330.0 621.3 329.5 626.0 330.0C630.7 330.5 634.7 332.0 638.0 334.0C641.3 336.0 644.0 339.0 646.0 342.0C648.0 345.0 648.0 348.3 650.0 352.0C652.0 355.7 656.0 361.0 658.0 364.0C660.0 367.0 661.3 369.0 662.0 370.0M614.0 327.0C616.7 326.2 624.7 322.7 630.0 322.0C635.3 321.3 641.7 322.3 646.0 323.0C650.3 323.7 654.5 324.7 656.0 326.0C657.5 327.3 656.8 330.5 655.0 331.0C653.2 331.5 646.7 329.3 645.0 329.0M638.0 290.0C638.0 292.3 636.0 301.2 638.0 304.0C640.0 306.8 646.0 306.7 650.0 307.0C654.0 307.3 660.0 306.2 662.0 306.0M627.0 367.0C627.5 366.6 629.8 365.2 630.0 364.4C630.2 363.6 629.0 361.8 628.0 362.4C627.0 363.0 626.0 365.4 624.0 368.0C622.0 370.6 619.0 374.7 616.0 378.0C613.0 381.3 609.0 385.3 606.0 388.0C603.0 390.7 599.3 393.0 598.0 394.0M488.0 378.0C486.0 379.0 479.3 381.3 476.0 384.0C472.7 386.7 470.0 390.3 468.0 394.0C466.0 397.7 464.3 402.5 464.0 406.0C463.7 409.5 465.7 413.5 466.0 415.0M488.0 370.0C488.0 371.3 487.0 375.3 488.0 378.0C489.0 380.7 492.7 383.3 494.0 386.0C495.3 388.7 493.3 391.3 496.0 394.0C498.7 396.7 506.0 400.2 510.0 402.0C514.0 403.8 515.3 404.6 520.0 405.0C524.7 405.4 531.7 404.1 538.0 404.4C544.3 404.7 554.7 406.6 558.0 407.0M550.0 378.0C551.7 379.0 556.7 382.3 560.0 384.0C563.3 385.7 568.3 387.3 570.0 388.0M488.0 380.0C486.0 380.7 479.7 381.7 476.0 384.0C472.3 386.3 468.2 390.3 466.0 394.0C463.8 397.7 462.7 402.0 463.0 406.0C463.3 410.0 465.2 414.3 468.0 418.0C470.8 421.7 475.7 424.8 480.0 428.0C484.3 431.2 490.7 434.8 494.0 437.0C497.3 439.2 498.3 439.5 500.0 441.0C501.7 442.5 503.5 444.3 504.0 446.0C504.5 447.7 503.2 450.2 503.0 451.0M520.0 405.0C521.0 405.8 524.0 409.2 526.0 410.0C528.0 410.8 533.3 407.5 532.0 410.0C530.7 412.5 522.8 420.0 518.0 425.0C513.2 430.0 505.5 437.5 503.0 440.0M522.0 407.0C524.0 407.5 529.3 407.8 534.0 410.0C538.7 412.2 546.9 417.7 550.0 420.0C553.1 422.3 552.0 423.0 552.4 423.6M505.0 411.0C505.2 412.0 504.8 416.0 506.0 417.0C507.2 418.0 511.2 417.7 512.0 417.0C512.8 416.3 510.0 412.5 511.0 413.0C512.0 413.5 516.8 418.8 518.0 420.0M570.0 388.0C573.3 387.0 581.3 387.3 586.0 388.0C590.7 388.7 595.7 390.0 598.0 392.0C600.3 394.0 600.7 396.0 600.0 400.0C599.3 404.0 596.3 411.0 594.0 416.0C591.7 421.0 588.0 426.5 586.0 430.0C584.0 433.5 584.7 436.3 582.0 437.0C579.3 437.7 574.0 435.3 570.0 434.0C566.0 432.7 561.2 430.5 558.0 429.0C554.8 427.5 552.0 427.2 551.0 425.0C550.0 422.8 550.5 419.5 552.0 416.0C553.5 412.5 557.7 407.7 560.0 404.0C562.3 400.3 564.3 396.7 566.0 394.0C567.7 391.3 566.7 389.0 570.0 388.0zM568.0 394.0C570.4 394.3 577.7 395.1 582.5 395.6C587.3 396.1 594.6 396.6 597.0 396.8M565.0 399.0C567.8 399.3 576.0 400.1 581.5 400.6C587.0 401.1 595.2 401.6 598.0 401.8M562.4 404.0C565.2 404.3 573.6 405.1 579.2 405.6C584.8 406.1 593.2 406.6 596.0 406.8M560.0 409.0C562.8 409.3 571.0 410.1 576.5 410.6C582.0 411.1 590.2 411.6 593.0 411.8M557.6 414.0C560.3 414.3 568.4 415.1 573.8 415.6C579.2 416.1 587.3 416.6 590.0 416.8M555.0 419.0C557.6 419.3 565.3 420.1 570.5 420.6C575.7 421.1 583.4 421.6 586.0 421.8M553.0 424.0C555.5 424.3 563.0 425.1 568.0 425.6C573.0 426.1 580.5 426.6 583.0 426.8M558.0 429.6C560.0 429.9 566.0 430.7 570.0 431.2C574.0 431.7 580.0 432.2 582.0 432.4M568.0 435.0C568.2 436.5 570.7 441.2 569.0 444.0C567.3 446.8 562.5 449.0 558.0 452.0C553.5 455.0 547.3 460.0 542.0 462.0C536.7 464.0 530.3 464.2 526.0 464.0C521.7 463.8 519.7 462.7 516.0 461.0C512.3 459.3 506.2 455.7 504.0 454.0C501.8 452.3 503.2 451.5 503.0 451.0M430.0 449.0C432.0 450.2 437.7 454.2 442.0 456.0C446.3 457.8 451.3 459.3 456.0 460.0C460.7 460.7 465.3 460.8 470.0 460.0C474.7 459.2 479.7 457.0 484.0 455.0C488.3 453.0 493.0 450.0 496.0 448.0C499.0 446.0 501.0 443.8 502.0 443.0M498.0 453.0C496.3 454.2 490.7 457.2 488.0 460.0C485.3 462.8 482.8 466.3 482.0 470.0C481.2 473.7 481.7 479.3 483.0 482.0C484.3 484.7 486.5 486.0 490.0 486.0C493.5 486.0 499.3 484.0 504.0 482.0C508.7 480.0 514.3 476.7 518.0 474.0C521.7 471.3 524.7 467.3 526.0 466.0M501.0 457.0C499.7 458.2 495.2 461.2 493.0 464.0C490.8 466.8 488.5 471.3 488.0 474.0C487.5 476.7 488.3 479.0 490.0 480.0C491.7 481.0 494.7 481.0 498.0 480.0C501.3 479.0 506.3 476.0 510.0 474.0C513.7 472.0 518.3 469.0 520.0 468.0M526.0 466.0C528.0 466.0 534.0 463.8 538.0 466.0C542.0 468.2 544.7 478.0 550.0 479.0C555.3 480.0 563.3 475.2 570.0 472.0C576.7 468.8 584.7 463.0 590.0 460.0C595.3 457.0 600.0 455.0 602.0 454.0M534.0 468.0C535.3 469.7 539.0 475.7 542.0 478.0C545.0 480.3 547.3 482.2 552.0 481.6C556.7 481.0 567.0 475.6 570.0 474.4M596.0 445.0C597.0 446.5 599.7 450.8 602.0 454.0C604.3 457.2 607.0 461.0 610.0 464.0C613.0 467.0 616.7 468.7 620.0 472.0C623.3 475.3 626.3 480.3 630.0 484.0C633.7 487.7 636.7 491.3 642.0 494.0C647.3 496.7 658.7 499.0 662.0 500.0M570.0 472.0C572.0 473.0 578.0 476.0 582.0 478.0C586.0 480.0 590.0 482.7 594.0 484.0C598.0 485.3 602.0 486.3 606.0 486.0C610.0 485.7 615.2 483.5 618.0 482.0C620.8 480.5 622.2 477.8 623.0 477.0M594.0 488.0C596.0 488.5 603.8 489.0 606.0 491.0C608.2 493.0 607.3 497.7 607.0 500.0C606.7 502.3 604.5 504.2 604.0 505.0M582.0 438.0C584.3 439.0 591.3 442.5 596.0 444.0C600.7 445.5 604.3 446.2 610.0 447.0C615.7 447.8 623.3 448.5 630.0 449.0C636.7 449.5 644.7 450.0 650.0 450.0C655.3 450.0 660.0 449.2 662.0 449.0M598.0 397.0C600.0 397.2 606.7 396.8 610.0 398.0C613.3 399.2 615.7 401.7 618.0 404.0C620.3 406.3 622.3 409.7 624.0 412.0C625.7 414.3 626.3 416.8 628.0 418.0C629.7 419.2 632.8 419.3 634.0 419.0C635.2 418.7 634.8 416.5 635.0 416.0M596.0 416.0C597.7 416.5 603.0 417.3 606.0 419.0C609.0 420.7 611.8 424.3 614.0 426.0C616.2 427.7 618.3 429.0 619.0 429.0C619.7 429.0 618.2 426.5 618.0 426.0M638.0 406.0C639.3 405.2 643.0 401.5 646.0 401.0C649.0 400.5 653.3 401.8 656.0 403.0C658.7 404.2 661.0 407.2 662.0 408.0M644.0 412.0C644.7 412.8 646.3 416.7 648.0 417.0C649.7 417.3 651.7 413.5 654.0 414.0C656.3 414.5 660.7 419.0 662.0 420.0M600.0 392.0C601.7 390.7 607.0 386.0 610.0 384.0C613.0 382.0 616.7 380.7 618.0 380.0M430.0 466.0C432.0 467.3 437.7 471.3 442.0 474.0C446.3 476.7 451.3 479.3 456.0 482.0C460.7 484.7 466.0 487.0 470.0 490.0C474.0 493.0 475.0 497.8 480.0 500.0C485.0 502.2 496.7 502.5 500.0 503.0M430.0 472.0C432.7 473.7 440.7 478.7 446.0 482.0C451.3 485.3 457.3 488.7 462.0 492.0C466.7 495.3 472.0 500.3 474.0 502.0M536.0 470.0C534.7 471.7 530.3 476.3 528.0 480.0C525.7 483.7 524.3 487.8 522.0 492.0C519.7 496.2 515.3 502.8 514.0 505.0M444.0 456.0C442.3 455.0 437.3 451.3 434.0 450.0C430.7 448.7 427.3 448.0 424.0 448.0C420.7 448.0 416.7 448.8 414.0 450.0C411.3 451.2 408.8 453.2 408.0 455.0C407.2 456.8 407.0 458.8 409.0 461.0C411.0 463.2 416.5 466.1 420.0 468.0C423.5 469.9 428.3 471.7 430.0 472.4M412.0 457.0C414.3 458.3 423.0 463.4 426.0 465.0C429.0 466.6 429.3 466.2 430.0 466.4M514.0 505.0C513.3 506.2 511.7 510.8 510.0 512.4C508.3 514.0 506.0 514.4 504.0 514.4C502.0 514.4 500.7 513.8 498.0 512.4C495.3 511.0 491.0 507.8 488.0 506.0C485.0 504.2 482.3 502.3 480.0 501.6C477.7 500.9 475.0 501.9 474.0 502.0M430.0 449.0C432.3 450.2 439.7 454.3 444.0 456.0C448.3 457.7 454.0 458.5 456.0 459.0M595.0 488.0C596.5 488.5 602.0 489.5 604.0 491.0C606.0 492.5 607.0 494.5 607.0 497.0C607.0 499.5 605.8 503.2 604.0 506.0C602.2 508.8 599.0 511.3 596.0 514.0C593.0 516.7 588.7 519.8 586.0 522.0C583.3 524.2 583.0 526.2 580.0 527.0C577.0 527.8 572.7 527.0 568.0 527.0C563.3 527.0 556.0 526.2 552.0 527.0C548.0 527.8 545.7 530.2 544.0 532.0C542.3 533.8 540.3 535.7 542.0 538.0C543.7 540.3 549.3 543.3 554.0 546.0C558.7 548.7 564.3 553.0 570.0 554.0C575.7 555.0 582.3 553.0 588.0 552.0C593.7 551.0 599.3 549.3 604.0 548.0C608.7 546.7 612.0 546.3 616.0 544.0C620.0 541.7 624.0 536.5 628.0 534.0C632.0 531.5 636.3 530.7 640.0 529.0C643.7 527.3 646.7 525.7 650.0 524.0C653.3 522.3 656.3 520.8 660.0 519.0C663.7 517.2 669.7 514.7 672.0 513.0C674.3 511.3 674.7 510.5 674.0 509.0C673.3 507.5 670.0 505.0 668.0 504.0C666.0 503.0 663.0 503.2 662.0 503.0M577.0 526.0C577.8 527.2 581.0 533.2 582.0 533.0C583.0 532.8 582.8 526.3 583.0 525.0M546.0 535.0C548.0 536.2 553.7 539.7 558.0 542.0C562.3 544.3 567.0 548.3 572.0 549.0C577.0 549.7 582.7 547.2 588.0 546.0C593.3 544.8 599.3 543.3 604.0 542.0C608.7 540.7 612.3 540.0 616.0 538.0C619.7 536.0 622.7 532.2 626.0 530.0C629.3 527.8 632.3 526.8 636.0 525.0C639.7 523.2 644.0 521.8 648.0 519.0C652.0 516.2 657.7 510.7 660.0 508.0C662.3 505.3 661.7 503.8 662.0 503.0M604.0 454.0C605.7 455.7 610.7 460.3 614.0 464.0C617.3 467.7 620.7 472.7 624.0 476.0C627.3 479.3 630.7 481.5 634.0 484.0C637.3 486.5 639.7 488.2 644.0 491.0C648.3 493.8 657.0 499.0 660.0 501.0C663.0 503.0 661.7 502.7 662.0 503.0M622.0 480.0C623.0 481.3 625.7 485.5 628.0 488.0C630.3 490.5 633.7 493.3 636.0 495.0C638.3 496.7 640.8 498.3 642.0 498.0C643.2 497.7 644.7 494.8 643.0 493.0C641.3 491.2 633.8 488.0 632.0 487.0M595.0 486.0C597.2 486.0 603.8 486.7 608.0 486.0C612.2 485.3 617.3 483.7 620.0 482.0C622.7 480.3 623.3 477.0 624.0 476.0M538.0 467.0C540.0 468.8 546.3 476.8 550.0 478.0C553.7 479.2 556.3 475.3 560.0 474.0C563.7 472.7 567.3 472.0 572.0 470.0C576.7 468.0 583.3 464.3 588.0 462.0C592.7 459.7 597.3 457.3 600.0 456.0C602.7 454.7 603.3 454.3 604.0 454.0M572.0 471.0C574.0 472.3 580.2 476.2 584.0 479.0C587.8 481.8 593.2 486.5 595.0 488.0M534.0 470.0C532.7 471.7 528.3 475.7 526.0 480.0C523.7 484.3 521.0 493.3 520.0 496.0M662.0 503.0C664.3 503.2 671.0 503.3 676.0 504.0C681.0 504.7 688.0 506.3 692.0 507.0C696.0 507.7 696.0 508.5 700.0 508.0C704.0 507.5 710.7 505.8 716.0 504.0C721.3 502.2 727.3 499.3 732.0 497.0C736.7 494.7 740.7 492.0 744.0 490.0C747.3 488.0 750.7 485.8 752.0 485.0M702.0 418.0C701.3 420.7 699.3 428.7 698.0 434.0C696.7 439.3 695.0 444.0 694.0 450.0C693.0 456.0 692.5 463.3 692.0 470.0C691.5 476.7 691.3 484.7 691.0 490.0C690.7 495.3 690.0 499.0 690.0 502.0C690.0 505.0 690.8 507.0 691.0 508.0M706.0 420.0C708.3 421.3 716.0 425.7 720.0 428.0C724.0 430.3 727.3 430.7 730.0 434.0C732.7 437.3 734.0 443.3 736.0 448.0C738.0 452.7 740.3 458.0 742.0 462.0C743.7 466.0 745.3 468.3 746.0 472.0C746.7 475.7 746.7 481.0 746.0 484.0C745.3 487.0 742.7 489.0 742.0 490.0M701.2 426.0C702.5 426.2 706.5 427.1 709.2 427.2C711.9 427.3 715.9 426.7 717.2 426.6M700.4 431.0C702.6 430.9 709.3 430.5 713.8 430.6C718.3 430.7 725.0 431.4 727.2 431.6M699.6 436.0C702.3 436.2 710.4 437.1 715.7 437.2C721.1 437.3 729.1 436.7 731.8 436.6M698.9 441.0C701.7 440.9 710.3 440.5 716.0 440.6C721.7 440.7 730.3 441.4 733.2 441.6M698.1 446.0C701.2 446.2 710.3 447.1 716.3 447.2C722.4 447.3 731.5 446.7 734.6 446.6M697.4 451.0C700.6 450.9 710.2 450.5 716.7 450.6C723.1 450.7 732.7 451.4 736.0 451.6M696.6 456.0C700.0 456.2 710.2 457.1 717.0 457.2C723.8 457.3 734.0 456.7 737.4 456.6M695.8 461.0C699.4 460.9 710.1 460.5 717.3 460.6C724.5 460.7 735.2 461.4 738.8 461.6M695.1 466.0C698.8 466.2 710.1 467.1 717.6 467.2C725.1 467.3 736.4 466.7 740.2 466.6M694.3 471.0C698.2 470.9 710.1 470.5 717.9 470.6C725.8 470.7 737.6 471.4 741.6 471.6M693.5 476.0C697.7 476.2 710.0 477.1 718.2 477.2C726.5 477.3 738.8 476.7 743.0 476.6M692.8 481.0C697.1 480.9 710.0 480.5 718.6 480.6C727.2 480.7 740.1 481.4 744.4 481.6M692.0 486.0C696.5 486.2 709.9 487.1 718.8 487.2C727.7 487.3 741.1 486.7 745.6 486.6M690.0 505.0C692.3 505.2 699.0 506.7 704.0 506.0C709.0 505.3 714.7 503.2 720.0 501.0C725.3 498.8 731.3 495.5 736.0 493.0C740.7 490.5 744.3 488.8 748.0 486.0C751.7 483.2 754.7 479.7 758.0 476.0C761.3 472.3 765.3 467.7 768.0 464.0C770.7 460.3 772.3 458.0 774.0 454.0C775.7 450.0 777.2 445.0 778.0 440.0C778.8 435.0 779.3 429.3 779.0 424.0C778.7 418.7 776.2 412.7 776.0 408.0C775.8 403.3 778.0 399.0 778.0 396.0C778.0 393.0 776.3 391.0 776.0 390.0M702.0 417.0C703.7 415.8 708.3 412.8 712.0 410.0C715.7 407.2 720.0 403.0 724.0 400.0C728.0 397.0 732.7 394.0 736.0 392.0C739.3 390.0 742.7 388.7 744.0 388.0M702.0 417.0C702.7 415.2 704.8 409.5 706.0 406.0C707.2 402.5 708.0 398.8 709.0 396.0C710.0 393.2 711.5 390.2 712.0 389.0M718.0 415.0C720.3 416.3 727.0 420.2 732.0 423.0C737.0 425.8 743.3 429.2 748.0 432.0C752.7 434.8 756.7 437.3 760.0 440.0C763.3 442.7 766.5 445.7 768.0 448.0C769.5 450.3 769.7 453.7 769.0 454.0C768.3 454.3 766.2 452.2 764.0 450.0C761.8 447.8 759.0 443.8 756.0 441.0C753.0 438.2 747.7 434.3 746.0 433.0M620.0 448.0C622.7 448.3 630.0 449.8 636.0 450.0C642.0 450.2 650.0 450.0 656.0 449.0C662.0 448.0 667.0 446.2 672.0 444.0C677.0 441.8 681.7 439.0 686.0 436.0C690.3 433.0 695.3 429.0 698.0 426.0C700.7 423.0 701.3 419.3 702.0 418.0M688.0 412.0C687.2 413.0 684.2 415.3 683.0 418.0C681.8 420.7 681.5 424.8 681.0 428.0C680.5 431.2 680.2 435.5 680.0 437.0M620.0 406.0C621.3 405.7 625.0 404.2 628.0 404.0C631.0 403.8 635.0 404.0 638.0 405.0C641.0 406.0 643.3 409.3 646.0 410.0C648.7 410.7 651.0 408.7 654.0 409.0C657.0 409.3 661.0 410.2 664.0 412.0C667.0 413.8 670.5 417.2 672.0 420.0C673.5 422.8 673.7 427.0 673.0 429.0C672.3 431.0 669.5 432.5 668.0 432.0C666.5 431.5 665.3 428.3 664.0 426.0C662.7 423.7 660.7 419.3 660.0 418.0M624.0 410.0C624.7 411.3 626.3 416.5 628.0 418.0C629.7 419.5 632.8 419.5 634.0 419.0C635.2 418.5 634.8 415.7 635.0 415.0M656.0 398.0C658.0 397.8 664.0 397.7 668.0 397.0C672.0 396.3 677.0 394.8 680.0 394.0C683.0 393.2 685.0 392.3 686.0 392.0M620.0 470.0C621.3 471.3 625.0 475.3 628.0 478.0C631.0 480.7 635.0 483.7 638.0 486.0C641.0 488.3 642.3 489.5 646.0 492.0C649.7 494.5 655.7 498.8 660.0 501.0C664.3 503.2 667.0 504.2 672.0 505.0C677.0 505.8 687.0 505.8 690.0 506.0M620.0 478.0C621.0 479.3 624.0 483.3 626.0 486.0C628.0 488.7 629.3 492.0 632.0 494.0C634.7 496.0 640.3 497.3 642.0 498.0M663.0 503.0C661.8 504.2 658.2 508.0 656.0 510.0C653.8 512.0 651.0 514.2 650.0 515.0M722.0 288.0C723.7 289.3 728.3 292.7 732.0 296.0C735.7 299.3 739.7 303.3 744.0 308.0C748.3 312.7 754.0 318.7 758.0 324.0C762.0 329.3 765.2 334.7 768.0 340.0C770.8 345.3 773.3 350.7 775.0 356.0C776.7 361.3 777.7 367.0 778.0 372.0C778.3 377.0 776.8 381.7 777.0 386.0C777.2 390.3 778.7 396.0 779.0 398.0M719.0 295.0C719.8 297.5 723.0 304.8 724.0 310.0C725.0 315.2 725.3 320.7 725.0 326.0C724.7 331.3 723.2 337.3 722.0 342.0C720.8 346.7 719.2 350.7 718.0 354.0C716.8 357.3 715.5 360.7 715.0 362.0M744.0 313.0C745.0 314.5 748.2 318.5 750.0 322.0C751.8 325.5 753.7 330.0 755.0 334.0C756.3 338.0 757.8 342.7 758.0 346.0C758.2 349.3 756.3 352.7 756.0 354.0M620.0 320.0C621.3 319.2 624.7 316.5 628.0 315.0C631.3 313.5 636.3 311.8 640.0 311.0C643.7 310.2 648.3 310.2 650.0 310.0M622.0 329.0C624.0 329.8 630.3 331.8 634.0 334.0C637.7 336.2 641.7 339.3 644.0 342.0C646.3 344.7 646.3 347.0 648.0 350.0C649.7 353.0 652.0 356.3 654.0 360.0C656.0 363.7 658.7 369.7 660.0 372.0C661.3 374.3 662.3 372.0 662.0 374.0C661.7 376.0 659.7 380.5 658.0 384.0C656.3 387.5 653.0 393.2 652.0 395.0M663.0 361.0C663.3 359.2 663.5 353.8 665.0 350.0C666.5 346.2 669.2 341.2 672.0 338.0C674.8 334.8 678.7 332.7 682.0 331.0C685.3 329.3 689.9 327.8 692.0 327.6C694.1 327.4 695.1 328.8 694.4 330.0C693.7 331.2 690.4 333.0 688.0 335.0C685.6 337.0 681.8 340.2 680.0 342.0C678.2 343.8 677.5 345.3 677.0 346.0M663.0 362.0C665.2 361.5 671.2 359.5 676.0 359.0C680.8 358.5 687.3 358.7 692.0 359.0C696.7 359.3 700.0 360.2 704.0 361.0C708.0 361.8 712.7 362.5 716.0 364.0C719.3 365.5 721.7 367.0 724.0 370.0C726.3 373.0 728.2 378.3 730.0 382.0C731.8 385.7 733.7 389.7 735.0 392.0C736.3 394.3 737.5 395.3 738.0 396.0M665.0 374.0C666.7 372.7 672.2 370.5 676.0 369.0C679.8 367.5 684.8 366.0 688.0 365.0C691.2 364.0 694.0 362.8 695.0 363.0C696.0 363.2 695.8 364.8 694.0 366.0C692.2 367.2 687.3 368.7 684.0 370.0C680.7 371.3 677.0 372.8 674.0 374.0C671.0 375.2 667.5 377.0 666.0 377.0C664.5 377.0 663.3 375.3 665.0 374.0zM724.0 372.0C723.0 373.0 720.0 375.3 718.0 378.0C716.0 380.7 713.7 385.2 712.0 388.0C710.3 390.8 708.7 393.8 708.0 395.0M751.0 370.0C750.5 371.3 749.2 375.7 748.0 378.0C746.8 380.3 744.7 383.0 744.0 384.0M768.0 372.0C766.7 372.5 762.7 373.7 760.0 375.0C757.3 376.3 754.7 378.0 752.0 380.0C749.3 382.0 746.7 384.8 744.0 387.0C741.3 389.2 737.3 392.0 736.0 393.0M660.0 389.0C661.7 388.7 668.0 389.7 672.0 390.0C676.0 390.3 681.7 390.5 684.0 391.0C686.3 391.5 687.3 392.7 686.0 393.0C684.7 393.3 680.0 393.2 676.0 393.0C672.0 392.8 664.7 392.3 662.0 391.6C659.3 390.9 658.3 389.3 660.0 389.0z" stroke="#55534a" stroke-width="1.35" transform="translate(-0.15,-0.45)"/></g>
</svg>
<div class="titlebar"></div>
<svg class="abs" style="left:2px;top:1px" width="9" height="12" viewBox="0 0 9 12"><rect x="0" y="0.3" width="8.4" height="10.6" rx="1.6" fill="#f08a24"/><rect x="2.6" y="1.8" width="3.2" height="3.4" fill="#fff2e0"/><rect x="1.6" y="7" width="5.2" height="1.6" fill="#c8680e"/></svg>
<span class="t" style="left:14.0px;top:3.1px;font-size:8.6px;transform:scaleX(0.843);color:#151515;">my first line art - Autodesk Fusion Personal (Not for Commercial Use)</span>
<svg class="abs" style="left:1085px;top:0" width="77" height="14" viewBox="0 0 77 14"><path d="M5.2 6.6h5.8" stroke="#222" stroke-width="1.1"/><rect x="32.3" y="4.3" width="5" height="5" rx="1.2" fill="none" stroke="#222" stroke-width="1.1"/><path d="M33.8 4.2v-.2q0-1 1-1h3q1.200 0 1.200 1.200v3q0 1-1 1h-.6" fill="none" stroke="#222" stroke-width="1.1"/><path d="M60.500 3.300l5.800 6M66.300 3.300l-5.800 6" stroke="#222" stroke-width="1.1"/></svg>
<div class="qat"><div class="tab"></div></div>
<svg class="abs" style="left:0;top:14px" width="140" height="20" viewBox="0 14 140 20">
<g fill="#555"><rect x="5.200" y="19.800" width="2" height="2"/><rect x="8" y="19.800" width="2" height="2"/><rect x="10.800" y="19.800" width="2" height="2"/><rect x="5.200" y="22.600" width="2" height="2"/><rect x="8" y="22.600" width="2" height="2"/><rect x="10.800" y="22.600" width="2" height="2"/><rect x="5.200" y="25.400" width="2" height="2"/><rect x="8" y="25.400" width="2" height="2"/><rect x="10.800" y="25.400" width="2" height="2"/></g>
<path d="M25.500 19.500h4l2.700 2.700v5.600h-6.700z" fill="#555"/><path d="M29.500 19.500v2.700h2.700" fill="none" stroke="#d6d6d6" stroke-width=".7"/>
<path d="M36 22.500h3.800l-1.900 2.400z" fill="#555"/>
<g fill="none" stroke="#a9a9a9" stroke-width="1"><rect x="50.500" y="20" width="7" height="7.500"/><path d="M50.500 23.500h7M54 20v7.500"/></g>
<path d="M70 23.500l2.500-2.500v1.700q4 0 4 4.300-1.200-2.200-4-2.200v1.700z" fill="#a9a9a9"/><path d="M81.800 22.500h3.200l-1.600 2.200z" fill="#a9a9a9"/>
<path d="M100 23.500l-2.500-2.500v1.700q-4 0-4 4.300 1.200-2.200 4-2.200v1.700z" fill="#a9a9a9"/><path d="M104.200 22.500h3.200l-1.600 2.200z" fill="#a9a9a9"/>
<path d="M118.800 26l4.800-4 4.800 4h-1.200v3.800h-2.600v-2.600h-2v2.600h-2.600v-3.800z" fill="#666"/>
</svg>
<svg class="abs" style="left:535px;top:20px" width="10" height="11" viewBox="0 0 10 11"><path d="M4.600.5l4.200 2v4.800l-4.200 2.400-4.200-2.400v-4.800z" fill="#f58220"/><path d="M4.600.5l4.200 2-4.200 2.200-4.200-2.200z" fill="#fbb066"/><path d="M4.600 4.700l4.200-2.200v4.800l-4.200 2.400z" fill="#d96a10"/></svg>
<span class="t" style="left:547.7px;top:21.1px;font-size:8.6px;transform:scaleX(0.834);color:#2d2d2d;">my first line art</span>
<svg class="abs" style="left:985px;top:14px" width="177" height="20" viewBox="985 14 177 20">
<path d="M991.800 22.500l5 5M996.800 22.500l-5 5" stroke="#444" stroke-width="1"/>
<path d="M1013.300 24.400h7.600M1017.100 20.600v7.600" stroke="#444" stroke-width="1.500"/>
<circle cx="1042.700" cy="23.700" r="4.500" fill="#0a78d6"/><path d="M1043.500 20.500l-2.600 3.600h1.800l-.8 2.900 2.800-3.900h-1.800z" fill="#fff"/>
<circle cx="1062.500" cy="23.700" r="4" fill="none" stroke="#666" stroke-width="1.200"/><path d="M1062.500 23.700l2-2.600M1059.800 21.500a3.500 3.500 0 0 1 3-1.500" stroke="#666" stroke-width="1" fill="none"/>
<circle cx="1082.700" cy="23.700" r="4.500" fill="#8a8a8a"/><circle cx="1082.700" cy="23.700" r="2.700" fill="#bdbdbd"/><path d="M1082.700 22v1.900h1.600" stroke="#666" stroke-width=".9" fill="none"/>
<path d="M1102.200 19.800q2.600 0 2.600 3.200 0 2.300 1 3.300h-7.200q1-1 1-3.300 0-3.200 2.600-3.200zM1101.200 27h2q0 1-1 1t-1-1z" fill="#666"/>
<circle cx="1122.600" cy="23.700" r="4.400" fill="#666"/><path d="M1121.300 22.600q0-1.300 1.300-1.300t1.300 1.200q0 .8-1.300 1.400v.8" stroke="#e0e0e0" stroke-width="1" fill="none"/><circle cx="1122.600" cy="26.200" r=".6" fill="#e0e0e0"/>
<circle cx="1147.700" cy="24" r="7" fill="#fff"/>
</svg>
<span class="t" style="left:1143.2px;top:20.7px;font-size:7px;transform:scaleX(0.910);color:#555;">RD</span>
<div class="ribbon"></div>
<div class="dbtn"></div>
<span class="t" style="left:24.1px;top:53.1px;font-size:8.6px;transform:scaleX(0.825);color:#555;font-weight:bold;">DESIGN</span>
<svg class="abs" style="left:0;top:0" width="1162" height="625"><path d="M54.7 56.7h3.5l-1.8 1.8z" fill="#555"/></svg>
<span class="t" style="left:90.7px;top:35.4px;font-size:8px;transform:scaleX(0.880);color:#222;font-weight:bold;">SOLID</span>
<span class="t" style="left:141.0px;top:35.4px;font-size:8px;transform:scaleX(0.810);color:#555;">SURFACE</span>
<span class="t" style="left:201.2px;top:35.4px;font-size:8px;transform:scaleX(0.839);color:#555;">MESH</span>
<span class="t" style="left:248.0px;top:35.4px;font-size:8px;transform:scaleX(0.841);color:#555;">SHEET METAL</span>
<span class="t" style="left:322.9px;top:35.4px;font-size:8px;transform:scaleX(0.813);color:#555;">PLASTIC</span>
<span class="t" style="left:379.0px;top:35.4px;font-size:8px;transform:scaleX(0.897);color:#555;">UTILITIES</span>
<div class="abs" style="left:83.800px;top:46.600px;width:36.200px;height:2.300px;background:#3a3a3a"></div>
<span class="t" style="left:141.1px;top:72.5px;font-size:8.6px;transform:scaleX(0.730);color:#555;">CREATE</span>
<svg class="abs" style="left:0;top:0" width="1162" height="625"><path d="M167.8 76.1h3.5l-1.8 1.8z" fill="#555"/></svg>
<span class="t" style="left:302.7px;top:72.5px;font-size:8.6px;transform:scaleX(0.798);color:#555;">MODIFY</span>
<svg class="abs" style="left:0;top:0" width="1162" height="625"><path d="M332.0 76.2h3.4l-1.7 1.7z" fill="#555"/></svg>
<span class="t" style="left:410.8px;top:72.5px;font-size:8.6px;transform:scaleX(0.769);color:#555;">CONFIGURE</span>
<svg class="abs" style="left:0;top:0" width="1162" height="625"><path d="M452.6 76.3h2.9l-1.4 1.4z" fill="#555"/></svg>
<span class="t" style="left:473.8px;top:72.5px;font-size:8.6px;transform:scaleX(0.748);color:#555;">CONSTRUCT</span>
<svg class="abs" style="left:0;top:0" width="1162" height="625"><path d="M516.3 76.2h3.1l-1.6 1.6z" fill="#555"/></svg>
<span class="t" style="left:539.5px;top:72.5px;font-size:8.6px;transform:scaleX(0.783);color:#555;">INSPECT</span>
<svg class="abs" style="left:0;top:0" width="1162" height="625"><path d="M570.8 76.2h3.1l-1.6 1.6z" fill="#555"/></svg>
<span class="t" style="left:612.6px;top:72.5px;font-size:8.6px;transform:scaleX(0.797);color:#555;">INSERT</span>
<svg class="abs" style="left:0;top:0" width="1162" height="625"><path d="M639.6 76.1h3.7l-1.8 1.8z" fill="#555"/></svg>
<span class="t" style="left:680.6px;top:72.5px;font-size:8.6px;transform:scaleX(0.779);color:#555;">ASSEMBLE</span>
<svg class="abs" style="left:0;top:0" width="1162" height="625"><path d="M719.0 76.2h3.4l-1.7 1.7z" fill="#555"/></svg>
<span class="t" style="left:740.8px;top:72.5px;font-size:8.6px;transform:scaleX(0.735);color:#555;">SELECT</span>
<svg class="abs" style="left:0;top:0" width="1162" height="625"><path d="M767.5 76.2h3.1l-1.6 1.6z" fill="#555"/></svg>
<div class="abs" style="left:238.7px;top:49px;width:1px;height:30px;background:#dcdcdc"></div>
<div class="abs" style="left:401.5px;top:49px;width:1px;height:30px;background:#dcdcdc"></div>
<div class="abs" style="left:464.3px;top:49px;width:1px;height:30px;background:#dcdcdc"></div>
<div class="abs" style="left:527.1px;top:49px;width:1px;height:30px;background:#dcdcdc"></div>
<div class="abs" style="left:586.3px;top:49px;width:1px;height:30px;background:#dcdcdc"></div>
<div class="abs" style="left:671.5px;top:49px;width:1px;height:30px;background:#dcdcdc"></div>
<div class="abs" style="left:731.3px;top:49px;width:1px;height:30px;background:#dcdcdc"></div>
<svg class="abs" style="left:0;top:44px" width="800" height="30" viewBox="0 44 800 30">
<defs><linearGradient id="gb" x1="0" y1="0" x2="0" y2="1"><stop offset="0" stop-color="#6db3ea"/><stop offset="1" stop-color="#4f9ddd"/></linearGradient>
<linearGradient id="gg" x1="0" y1="0" x2="1" y2="1"><stop offset="0" stop-color="#f2f2f2"/><stop offset="1" stop-color="#c9c9c9"/></linearGradient></defs>
<!-- extrude -->
<path d="M83.400 66h11.100l3.400-1.800v2.500l-3.400 1.800h-11.100z" fill="#bdbdbd"/>
<path d="M83.400 52.300h11.100v13.700h-11.100z" fill="url(#gb)"/><path d="M83.400 52.300l3.200-2.600h11.300l-3.400 2.600z" fill="#8cc6f2"/><path d="M94.500 52.300l3.400-2.600v14.500l-3.400 1.800z" fill="#3f86c6"/>
<path d="M100.700 51.500v13.500" stroke="#444" stroke-width="1"/><path d="M100.700 50l1.500 2.600h-3z" fill="#444"/>
<!-- new sketch -->
<rect x="110.200" y="50.800" width="16" height="15.600" fill="none" stroke="#555" stroke-width=".9" stroke-dasharray="2 1"/>
<g fill="#333"><rect x="109.400" y="50" width="1.600" height="1.600"/><rect x="125.400" y="50" width="1.600" height="1.600"/><rect x="109.400" y="65.600" width="1.600" height="1.600"/></g>
<path d="M113.500 63.300v-9.300h9.600q0 9.300-9.600 9.300z" fill="#ececec" stroke="#555" stroke-width=".9"/>
<path d="M120 63.400h3v-3h2.300v3h3v2.300h-3v3h-2.300v-3h-3z" fill="#22a046"/>
<!-- revolve -->
<path d="M135.200 58.500q9.800-7 19.600 0v5.500l-3.400 3.200v-5.200q-6.400-3.600-12.800 0v5.200l-3.400-3.200z" fill="#5aa7e4"/><path d="M135.200 58.500q9.800-7 19.600 0l-3.400 3.500q-6.400-3.600-12.800 0z" fill="#86c2f0"/><ellipse cx="153.200" cy="62.500" rx="1.700" ry="3" fill="#f4f4f4" stroke="#777" stroke-width=".5"/>
<path d="M137 53.300q8-4.600 16.200.6" fill="none" stroke="#444" stroke-width=".9"/><path d="M135.600 54.500l1-2.800 1.800 2z" fill="#444"/>
<!-- hole -->
<path d="M161.500 53.200l4.200-3.600h14.800v14.600l-4.200 4.400h-14.800z" fill="url(#gg)" stroke="#8a8a8a" stroke-width=".7"/><path d="M161.500 53.200h14.800v15.400M176.300 53.200l4.200-3.600" fill="none" stroke="#8a8a8a" stroke-width=".7"/>
<circle cx="168.400" cy="61.200" r="4.900" fill="#5aa7e4" stroke="#777" stroke-width=".6"/><path d="M168.400 56.300a4.900 4.900 0 0 1 4.900 4.900q-2.600-.8-3.400-2.300t-1.500-2.600z" fill="#e8f2fb"/>
<!-- pattern -->
<path d="M189.500 53h12.400M189.500 53v12.600h12.400" stroke="#777" stroke-width=".8" fill="none"/>
<rect x="187.600" y="51.100" width="3.800" height="3.800" fill="#fff" stroke="#777" stroke-width=".7"/><rect x="200" y="51.100" width="3.900" height="3.900" fill="#5aa7e4"/><rect x="187.600" y="63.600" width="3.900" height="3.900" fill="#5aa7e4"/><rect x="200" y="63.600" width="3.900" height="3.900" fill="#5aa7e4"/>
<!-- form -->
<path d="M213.200 54q0-3.800 3.800-3.800h9q3.600 0 3.600 3.800v8.400q0 3.800-3.600 3.800h-9q-3.800 0-3.800-3.800z" fill="#a77fd6"/><path d="M215 53.500q0-2.200 2.200-2.200h7.600q2.200 0 2.200 2.200v8.800q0 2.200-2.200 2.200h-7.600q-2.200 0-2.200-2.200z" fill="#bb98e4"/><path d="M221 51.300v13.200M215 58h12" stroke="#8e63c2" stroke-width=".7"/><path d="M227 51.800q2.600.4 2.600 3v7l-2.600 2.400z" fill="#6d45a6"/>
<path d="M223.300 63.400h3v-3h2.300v3h3v2.300h-3v3h-2.300v-3h-3z" fill="#22a046"/>
<!-- press pull -->
<path d="M246.500 55q0-4.500 4.500-5h2v18.600h-6.500z" fill="#e4e4e4" stroke="#8a8a8a" stroke-width=".7"/><path d="M253 50l3.200-.6h3.600v17.400l-3.200 1.800h-3.600z" fill="#5aa7e4"/><path d="M256.600 49.600h3.200v17.200l-3.200 1.800z" fill="#3f86c6"/>
<path d="M259.500 59h3" stroke="#333" stroke-width="1"/><path d="M264.400 59l-2.400 1.500v-3z" fill="#333"/>
<!-- fillet -->
<path d="M272.200 55l4.800-5.200h5q9.500 1.500 9.600 10.200v5l-3.400 3.600h-16z" fill="url(#gg)" stroke="#8a8a8a" stroke-width=".7"/><path d="M277 49.800h5q9.500 1.500 9.600 10.200l-3.400 2.600q-.6-7.400-8.200-8.600z" fill="#5aa7e4"/><path d="M272.200 55h5q10 .8 11 8v5.600" fill="none" stroke="#8a8a8a" stroke-width=".6"/>
<!-- shell -->
<path d="M298.200 53.400l4.600-3.800h15v14.600l-4.600 4.400h-15z" fill="url(#gg)" stroke="#8a8a8a" stroke-width=".7"/><path d="M298.200 53.400h15v15.200M313.200 53.400l4.600-3.800" fill="none" stroke="#8a8a8a" stroke-width=".7"/>
<path d="M301 56.200h4.200v5.600h5.600v4.200h-9.800z" fill="#5aa7e4"/><path d="M301 56.200h2v9.800h-2z" fill="#3f86c6"/>
<!-- combine -->
<path d="M330.500 54.500l4-4.200h8.800v9.500l-4 4.300v4.500h-8.800v-0h-6.300v-9.600l3.800-4.500z" fill="#5aa7e4"/><path d="M334.500 50.300h8.800l-4 4.200h-8.800zM328 54.500l-3.800 4.500h8.800" fill="#86c2f0"/><path d="M339.300 54.500l4-4.200v9.500l-4 4.300zM333 59v9.600h6.300v-4.500l-3 0z" fill="#3f86c6" fill-opacity=".55"/>
<!-- split -->
<path d="M351 53l3-3.200h14.600v6.400l-3 3.200h-14.600z" fill="#5aa7e4"/><path d="M354 49.800h14.600l-3 3.200h-14.600z" fill="#86c2f0"/>
<path d="M351.400 61.500h14.200l3-2.600v6.500l-3 3.200h-14.200z" fill="#dedede" stroke="#a0a0a0" stroke-width=".6"/>
<path d="M349.800 60.300h15.800l3.800-3.400" fill="none" stroke="#9ad0ee" stroke-width="1"/>
<!-- move -->
<path d="M386 51.500v16M378 59.500h16" stroke="#222" stroke-width="1.500"/><path d="M386 49.800l2.600 3.400h-5.200zM386 69.200l2.600-3.400h-5.200zM376.300 59.500l3.400-2.600v5.200zM395.700 59.500l-3.400-2.600v5.200z" fill="#222"/>
<!-- configure 1 -->
<path d="M411 54l3-3.500h8v12.500l-3 3h-8z" fill="#e2e2e2" stroke="#c4c4c4" stroke-width=".6"/>
<circle cx="425.200" cy="53.900" r="4.500" fill="#0a78d6"/><path d="M426 50.700l-2.600 3.600h1.800l-.8 2.900 2.800-3.900h-1.800z" fill="#fff"/>
<path d="M421 62.500h6M420 66h6.500" stroke="#b9c4cc" stroke-width=".9"/><path d="M420.200 62.500l2-1.400v2.800zM427.800 66l-2-1.400v2.800z" fill="#b9c4cc"/>
<!-- configure 2 -->
<rect x="437" y="50.300" width="10.800" height="15.500" fill="#f0f0f0" stroke="#bdbdbd" stroke-width=".6"/><rect x="437" y="50.300" width="10.800" height="2.400" fill="#c9c9c9"/><path d="M440.600 52.700v13.100M444.200 52.700v13.100M437 56.500h10.800M437 59.600h10.800M437 62.700h10.800" stroke="#bdbdbd" stroke-width=".6"/>
<circle cx="451.200" cy="53.900" r="4.500" fill="#0a78d6"/><path d="M452 50.700l-2.600 3.600h1.800l-.8 2.900 2.800-3.900h-1.800z" fill="#fff"/>
<path d="M448 62.500h6M447 66h6.500" stroke="#b9c4cc" stroke-width=".9"/><path d="M447.200 62.500l2-1.400v2.800zM454.800 66l-2-1.400v2.800z" fill="#b9c4cc"/>
<!-- construct -->
<path d="M487.600 56l5.500-6.200h2v12.800l-5.500 6.200h-2z" fill="#e2e2e2" stroke="#8a8a8a" stroke-width=".7"/><path d="M491 56.200l6.600-6.400h1.600v12.400l-6.600 6.400h-1.600z" fill="#4cb36a"/><path d="M500.300 56.400l5.600-6v11.400l-5.600 6z" fill="#e89358"/>
<!-- measure -->
<path d="M537 57h15.400M536.600 54.800v4.400M552.800 54.800v4.400" stroke="#444" stroke-width=".8"/><path d="M536.800 57l2.200-1.200v2.400zM552.600 57l-2.200-1.200v2.400z" fill="#444"/>
<rect x="536.300" y="60.800" width="16.800" height="3.300" fill="#f0a818"/><path d="M538 62.500h13.500" stroke="#c98608" stroke-width=".6" stroke-dasharray=".7 1"/>
<!-- interference -->
<rect x="566.500" y="51.800" width="11.800" height="13.800" fill="#f1f1f1" stroke="#b4b4b4" stroke-width=".7"/><path d="M566.500 58.700h11.800" stroke="#b4b4b4" stroke-width=".7"/>
<rect x="563.600" y="51.800" width="6.600" height="13.800" fill="#8fc6ee" stroke="#5aa7e4" stroke-width=".7"/><path d="M563.600 58.700h6.600" stroke="#5aa7e4" stroke-width=".7"/>
<path d="M564.800 50h-2.700v17.600h2.700M568.800 50h1.600v17.600h-1.600" fill="none" stroke="#3b8fd6" stroke-width=".9"/>
<!-- insert derive -->
<path d="M597.500 54l4.400-3.800h11v12.200l-4.400 3.800h-11z" fill="url(#gg)" stroke="#8a8a8a" stroke-width=".7"/><path d="M597.500 54h11v12.200M608.500 54l4.400-3.800" fill="none" stroke="#8a8a8a" stroke-width=".6"/>
<path d="M594.800 64.500q.2-4.600 4.800-4.600v-2l3.800 3.200-3.800 3.200v-2q-2.600-.2-4.800 2.200z" fill="#2b2b2b"/>
<!-- image -->
<rect x="620.200" y="49.800" width="17.800" height="17.900" fill="#62b0ea"/><path d="M620.200 67.700v-5.200l5.200-5.200 4.600 4.800 2.800-2.600 5.200 5.400v2.800z" fill="#3f8cc8"/><circle cx="633.300" cy="54.600" r="1.700" fill="#fff"/>
<!-- insert mesh -->
<path d="M648.200 59l3.600-4.800 7.200-1.400 5.600 3.200 1 7.600-3.800 4.600-7.400 1-5.200-3.600z" fill="#d9b44c"/><path d="M651.800 54.200l4.800 4.200 8-2.400M656.600 58.400l-1.600 10.600M648.200 59l8.400-.6M656.600 58.400l9 5.200M649.200 65.600l7.400-7.200" stroke="#b8922c" stroke-width=".6" fill="none"/>
<path d="M646 52.400h5.800v-1.800l3.800 2.800-3.800 2.800v-1.800h-5.800z" fill="#0a78d6"/>
<!-- assemble -->
<path d="M692 51.400l1.600-1.700h5.400v5.200l-1.600 1.700h-5.400z" fill="#dcdcdc" stroke="#8a8a8a" stroke-width=".6"/><path d="M692 51.400h5.400v5.200M697.400 51.400l1.600-1.700" stroke="#8a8a8a" stroke-width=".5" fill="none"/>
<path d="M700 51.600h2.600q.8 0 .8.800v2" fill="none" stroke="#333" stroke-width=".8"/><path d="M703.400 56l-1.300-1.800h2.600z" fill="#333"/>
<rect x="699.800" y="57" width="6" height="5.600" fill="#5aa7e4"/><path d="M699.800 57l1-1h6v5.600l-1 1" fill="#86c2f0" fill-opacity=".7"/>
<rect x="699.800" y="62.600" width="5.400" height="5.600" fill="#e2e2e2" stroke="#9a9a9a" stroke-width=".6"/><path d="M705.200 63.800l1.400-1.200h4.200v4.400l-1.400 1.200h-4.200z" fill="#e2e2e2" stroke="#9a9a9a" stroke-width=".6"/>
<!-- select -->
<rect x="743.500" y="47.600" width="24" height="23.200" fill="#cfe9f3" stroke="#b5deef" stroke-width=".8"/>
<rect x="745.800" y="50" width="17" height="12.600" fill="none" stroke="#3aa391" stroke-width="1" stroke-dasharray="1.800 1.300"/>
<path d="M758.600 59v8.600l2-1.800 1.400 3 1.400-.7-1.400-2.900h2.600z" fill="#fff" stroke="#333" stroke-width=".8" stroke-linejoin="round"/>
</svg>

<div class="phead" style="left:3px;top:88px;width:181px;height:14px"></div>
<span class="t" style="left:19.9px;top:90.8px;font-size:8.6px;transform:scaleX(0.761);color:#444;">BROWSER</span>
<svg class="abs" style="left:0;top:85px" width="200" height="125" viewBox="0 85 200 125"><path d="M9 93l-2.200 2 2.200 2zM12 93l-2.200 2 2.200 2z" fill="#666"/><path d="M171.700 94.800h5" stroke="#444" stroke-width="1.200"/></svg>
<svg class="abs" style="left:0;top:100px" width="200" height="110" viewBox="0 100 200 110">
<rect x="33.0" y="120.0" width="90.0" height="12" rx="2" fill="#fff" fill-opacity=".72"/>
<rect x="33.0" y="134.2" width="70.0" height="12" rx="2" fill="#fff" fill-opacity=".72"/>
<rect x="33.0" y="148.9" width="61.0" height="12" rx="2" fill="#fff" fill-opacity=".72"/>
<rect x="33.0" y="163.3" width="63.0" height="12" rx="2" fill="#fff" fill-opacity=".72"/>
<rect x="33.0" y="177.8" width="72.0" height="12" rx="2" fill="#fff" fill-opacity=".72"/>
<rect x="33.0" y="192.3" width="71.0" height="12" rx="2" fill="#fff" fill-opacity=".72"/>
<rect x="39.500" y="105.800" width="78" height="11" fill="#d9d9d9"/>
<path d="M13 110l2.800 2.800 2.800-2.800" fill="none" stroke="#555" stroke-width="1.100"/>
<path d="M25.8 111.5q4.900-5.800 9.800 0q-4.900 5.800-9.800 0z" fill="#fff" stroke="#444" stroke-width="1"/><circle cx="30.7" cy="111.5" r="1.900" fill="#444"/>
<path d="M43 108.500l1.600-1.400h5v7.600l-1.600 1.400h-5z" fill="#f4f4f4" stroke="#555" stroke-width=".8" stroke-linejoin="round"/><path d="M43 108.500h5v7.600M48 108.500l1.600-1.400" fill="none" stroke="#555" stroke-width=".6"/>
<circle cx="124.500" cy="111.700" r="3.500" fill="#fff" stroke="#333" stroke-width=".9"/><circle cx="124.500" cy="111.700" r="1.500" fill="#333"/>
<path d="M25.2 123.4l2.600 2.600-2.600 2.600" fill="none" stroke="#555" stroke-width="1"/>
<path d="M46.49 126.32L46.25 127.54L44.75 127.51L44.26 128.24L44.86 129.61L43.83 130.30L42.79 129.22L41.93 129.39L41.38 130.79L40.16 130.55L40.19 129.05L39.46 128.56L38.09 129.16L37.40 128.13L38.48 127.09L38.31 126.23L36.91 125.68L37.15 124.46L38.65 124.49L39.14 123.76L38.54 122.39L39.57 121.70L40.61 122.78L41.47 122.61L42.02 121.21L43.24 121.45L43.21 122.95L43.94 123.44L45.31 122.84L46.00 123.87L44.92 124.91L45.09 125.77z" fill="#444"/><circle cx="41.7" cy="126.0" r="1.700" fill="#fff"/>
<path d="M25.2 137.6l2.600 2.600-2.600 2.600" fill="none" stroke="#555" stroke-width="1"/>
<path d="M37.4 136.4h3l.8 1.200h4.800v6.200h-8.600z" fill="#fafafa" stroke="#555" stroke-width=".9" stroke-linejoin="round"/>
<path d="M25.2 152.3l2.600 2.600-2.600 2.600" fill="none" stroke="#555" stroke-width="1"/>
<path d="M36.8 154.9q4.900-5.400 9.800 0q-4.900 5.400-9.800 0z" fill="none" stroke="#8a8a8a" stroke-width=".9"/><circle cx="41.7" cy="154.9" r="1.700" fill="none" stroke="#8a8a8a" stroke-width=".8"/><path d="M38.1 158.1l5.600-6.400M40.1 158.1l5.600-6.400" stroke="#8a8a8a" stroke-width=".8"/>
<path d="M52.6 151.1h3l.8 1.200h4.800v6.200h-8.600z" fill="#fafafa" stroke="#555" stroke-width=".9" stroke-linejoin="round"/>
<path d="M25.2 166.7l2.600 2.600-2.600 2.600" fill="none" stroke="#555" stroke-width="1"/>
<path d="M36.8 169.3q4.900-5.800 9.800 0q-4.900 5.800-9.800 0z" fill="#fff" stroke="#444" stroke-width="1"/><circle cx="41.7" cy="169.3" r="1.900" fill="#444"/>
<path d="M52.6 165.5h3l.8 1.200h4.800v6.200h-8.600z" fill="#fafafa" stroke="#555" stroke-width=".9" stroke-linejoin="round"/>
<path d="M25.2 181.2l2.600 2.600-2.600 2.600" fill="none" stroke="#555" stroke-width="1"/>
<path d="M36.8 183.8q4.900-5.400 9.800 0q-4.900 5.400-9.800 0z" fill="none" stroke="#8a8a8a" stroke-width=".9"/><circle cx="41.7" cy="183.8" r="1.700" fill="none" stroke="#8a8a8a" stroke-width=".8"/><path d="M38.1 187.0l5.600-6.400M40.1 187.0l5.600-6.400" stroke="#8a8a8a" stroke-width=".8"/>
<path d="M52.6 180.0h3l.8 1.200h4.800v6.200h-8.600z" fill="#fafafa" stroke="#555" stroke-width=".9" stroke-linejoin="round"/>
<path d="M25.2 195.7l2.600 2.600-2.600 2.600" fill="none" stroke="#555" stroke-width="1"/>
<path d="M36.8 198.3q4.900-5.400 9.800 0q-4.900 5.400-9.800 0z" fill="none" stroke="#8a8a8a" stroke-width=".9"/><circle cx="41.7" cy="198.3" r="1.700" fill="none" stroke="#8a8a8a" stroke-width=".8"/><path d="M38.1 201.5l5.600-6.400M40.1 201.5l5.600-6.400" stroke="#8a8a8a" stroke-width=".8"/>
<path d="M52.6 194.5h3l.8 1.200h4.800v6.200h-8.600z" fill="#fafafa" stroke="#555" stroke-width=".9" stroke-linejoin="round"/>
</svg>
<span class="t" style="left:59.9px;top:106.7px;font-size:8px;transform:scaleX(0.914);color:#333;font-weight:bold;">my first line art</span>
<span class="t" style="left:55.5px;top:121.2px;font-size:8px;transform:scaleX(0.963);color:#444;">Document Settings</span>
<span class="t" style="left:55.5px;top:135.4px;font-size:8px;transform:scaleX(0.919);color:#444;">Named Views</span>
<span class="t" style="left:70.5px;top:150.1px;font-size:8px;transform:scaleX(0.956);color:#444;">Origin</span>
<span class="t" style="left:70.5px;top:164.5px;font-size:8px;transform:scaleX(0.920);color:#444;">Bodies</span>
<span class="t" style="left:70.5px;top:179.0px;font-size:8px;transform:scaleX(0.886);color:#444;">Canvases</span>
<span class="t" style="left:70.5px;top:193.5px;font-size:8px;transform:scaleX(0.918);color:#444;">Sketches</span>
<div class="phead" style="left:3px;top:579px;width:181px;height:12.500px"></div>
<span class="t" style="left:19.6px;top:580.7px;font-size:8.6px;transform:scaleX(0.789);color:#444;">COMMENTS</span>
<svg class="abs" style="left:168px;top:580px" width="12" height="10" viewBox="168 580 12 10"><path d="M171.300 584.800h5M173.800 582.300v5" stroke="#444" stroke-width="1.100"/></svg>
<div class="bottombar"></div>
<svg class="abs" style="left:0;top:595px" width="1162" height="30" viewBox="0 595 1162 30">
<g fill="#666"><rect x="6.500" y="606.400" width="1.400" height="6.800"/><path d="M13.800 606.400v6.800l-5.600-3.400z"/><path d="M27.200 606.400v6.800l-5.800-3.400z"/><rect x="28" y="608.300" width="1.200" height="3"/><path d="M37 605.300v8.800l7.200-4.400z"/><path d="M53.200 606.400v6.800l5.800-3.400z"/><rect x="51.200" y="608.300" width="1.200" height="3"/><path d="M67 606.400v6.800l5.600-3.400z"/><rect x="73" y="606.400" width="1.400" height="6.800"/></g>
<path d="M93.500 619.400h660" stroke="#c4c4c4" stroke-width=".9"/>
<path d="M93.1 616.400v3" stroke="#c4c4c4" stroke-width=".8"/>
<g opacity="1"><rect x="88.2" y="605.200" width="8" height="7.600" fill="#fdfdfd" stroke="#777" stroke-width=".8" stroke-dasharray="1.600 .8"/><g fill="#3b8fd6"><rect x="87.5" y="604.400" width="1.500" height="1.500"/><rect x="95.5" y="604.400" width="1.500" height="1.500"/><rect x="87.5" y="612.100" width="1.500" height="1.500"/></g><path d="M92.4 613.600l1-2.600 4-4 1.600 1.600-4 4z" fill="#f0a020"/><path d="M92.4 613.600l1-2.600 1.600 1.600z" fill="#c25a10"/></g>
<path d="M107.6 616.400v3" stroke="#c4c4c4" stroke-width=".8"/>
<g opacity="1"><path d="M102.7 606.300l1.600-1.700h6.400v7.200l-1.600 1.700h-6.400z" fill="#4f9ddd"/><path d="M102.7 606.300l1.600-1.700h6.400l-1.600 1.700z" fill="#8cc6f2"/><path d="M109.1 606.300l1.600-1.700v7.200l-1.600 1.700z" fill="#2f78ba"/><path d="M102.7 613.500h6.400v.9h-6.400z" fill="#b5b5b5"/><path d="M112.0 605.200v8" stroke="#555" stroke-width=".8"/></g>
<path d="M122.2 616.400v3" stroke="#c4c4c4" stroke-width=".8"/>
<g opacity="1"><rect x="117.3" y="605.200" width="8" height="7.600" fill="#fdfdfd" stroke="#777" stroke-width=".8" stroke-dasharray="1.600 .8"/><g fill="#3b8fd6"><rect x="116.6" y="604.400" width="1.500" height="1.500"/><rect x="124.6" y="604.400" width="1.500" height="1.500"/><rect x="116.6" y="612.100" width="1.500" height="1.500"/></g><path d="M121.5 613.600l1-2.600 4-4 1.600 1.600-4 4z" fill="#f0a020"/><path d="M121.5 613.600l1-2.600 1.600 1.600z" fill="#c25a10"/></g>
<path d="M136.7 616.400v3" stroke="#c4c4c4" stroke-width=".8"/>
<g opacity="1"><rect x="132.0" y="604.400" width="9.300" height="9" fill="#4f9fe0"/><path d="M132.0 613.400v-2.600l2.700-2.700 2.300 2.400 1.400-1.300 2.900 2.900v1.300z" fill="#2f7cc0"/><circle cx="138.8" cy="606.800" r="1" fill="#fff"/></g>
<path d="M151.3 616.400v3" stroke="#c4c4c4" stroke-width=".8"/>
<g opacity="1"><rect x="146.4" y="605.200" width="8" height="7.600" fill="#fdfdfd" stroke="#777" stroke-width=".8" stroke-dasharray="1.600 .8"/><g fill="#3b8fd6"><rect x="145.7" y="604.400" width="1.500" height="1.500"/><rect x="153.7" y="604.400" width="1.500" height="1.500"/><rect x="145.7" y="612.100" width="1.500" height="1.500"/></g><path d="M150.6 613.600l1-2.600 4-4 1.600 1.600-4 4z" fill="#f0a020"/><path d="M150.6 613.600l1-2.600 1.600 1.600z" fill="#c25a10"/></g>
<path d="M165.8 616.400v3" stroke="#c4c4c4" stroke-width=".8"/>
<g opacity="1"><path d="M160.9 606.300l1.600-1.700h6.400v7.200l-1.600 1.700h-6.400z" fill="#4f9ddd"/><path d="M160.9 606.300l1.600-1.700h6.400l-1.600 1.700z" fill="#8cc6f2"/><path d="M167.3 606.300l1.600-1.700v7.200l-1.600 1.700z" fill="#2f78ba"/><path d="M160.9 613.500h6.400v.9h-6.400z" fill="#b5b5b5"/><path d="M170.2 605.200v8" stroke="#555" stroke-width=".8"/></g>
<path d="M180.3 616.400v3" stroke="#c4c4c4" stroke-width=".8"/>
<g opacity="1"><path d="M175.4 606.300l1.600-1.700h6.400v7.200l-1.600 1.700h-6.400z" fill="#4f9ddd"/><path d="M175.4 606.300l1.600-1.700h6.400l-1.600 1.700z" fill="#8cc6f2"/><path d="M181.8 606.300l1.600-1.700v7.200l-1.600 1.700z" fill="#2f78ba"/><path d="M175.4 613.500h6.400v.9h-6.400z" fill="#b5b5b5"/><path d="M184.7 605.200v8" stroke="#555" stroke-width=".8"/></g>
<path d="M194.9 616.400v3" stroke="#c4c4c4" stroke-width=".8"/>
<g opacity="1"><path d="M190.0 606.300l1.600-1.700h6.400v7.200l-1.600 1.700h-6.400z" fill="#4f9ddd"/><path d="M190.0 606.300l1.600-1.700h6.400l-1.600 1.700z" fill="#8cc6f2"/><path d="M196.4 606.300l1.600-1.700v7.200l-1.600 1.700z" fill="#2f78ba"/><path d="M190.0 613.500h6.400v.9h-6.400z" fill="#b5b5b5"/><path d="M199.3 605.200v8" stroke="#555" stroke-width=".8"/></g>
<path d="M209.4 616.400v3" stroke="#c4c4c4" stroke-width=".8"/>
<g opacity="1"><path d="M204.5 606.300l1.600-1.700h6.400v7.200l-1.600 1.700h-6.400z" fill="#4f9ddd"/><path d="M204.5 606.300l1.600-1.700h6.400l-1.600 1.700z" fill="#8cc6f2"/><path d="M210.9 606.300l1.600-1.700v7.200l-1.600 1.700z" fill="#2f78ba"/><path d="M204.5 613.500h6.400v.9h-6.400z" fill="#b5b5b5"/><path d="M213.8 605.200v8" stroke="#555" stroke-width=".8"/></g>
<path d="M224.0 616.400v3" stroke="#c4c4c4" stroke-width=".8"/>
<g opacity="1"><path d="M219.1 606.300l1.600-1.700h6.400v7.200l-1.600 1.700h-6.400z" fill="#4f9ddd"/><path d="M219.1 606.300l1.600-1.700h6.400l-1.600 1.700z" fill="#8cc6f2"/><path d="M225.5 606.300l1.600-1.700v7.200l-1.600 1.700z" fill="#2f78ba"/><path d="M219.1 613.500h6.400v.9h-6.400z" fill="#b5b5b5"/><path d="M228.4 605.200v8" stroke="#555" stroke-width=".8"/></g>
<rect x="231.7" y="602.600" width="13.600" height="13.400" fill="#f7cd94" opacity="1"/>
<path d="M238.5 616.400v3" stroke="#c4c4c4" stroke-width=".8"/>
<g opacity="1"><path d="M233.6 606.300l1.600-1.700h6.400v7.200l-1.600 1.700h-6.400z" fill="#4f9ddd"/><path d="M233.6 606.300l1.600-1.700h6.400l-1.600 1.700z" fill="#8cc6f2"/><path d="M240.0 606.300l1.600-1.700v7.200l-1.600 1.700z" fill="#2f78ba"/><path d="M233.6 613.500h6.400v.9h-6.400z" fill="#b5b5b5"/><path d="M242.9 605.200v8" stroke="#555" stroke-width=".8"/></g>
<path d="M253.0 616.400v3" stroke="#c4c4c4" stroke-width=".8"/>
<g opacity="1"><path d="M248.1 606.300l1.600-1.700h6.400v7.200l-1.600 1.700h-6.400z" fill="#4f9ddd"/><path d="M248.1 606.300l1.600-1.700h6.400l-1.600 1.700z" fill="#8cc6f2"/><path d="M254.5 606.300l1.600-1.700v7.200l-1.600 1.700z" fill="#2f78ba"/><path d="M248.1 613.500h6.400v.9h-6.400z" fill="#b5b5b5"/><path d="M257.4 605.200v8" stroke="#555" stroke-width=".8"/></g>
<path d="M267.6 616.400v3" stroke="#c4c4c4" stroke-width=".8"/>
<g opacity="1"><path d="M262.7 606.300l1.600-1.700h6.400v7.200l-1.600 1.700h-6.400z" fill="#4f9ddd"/><path d="M262.7 606.300l1.600-1.700h6.400l-1.600 1.700z" fill="#8cc6f2"/><path d="M269.1 606.300l1.600-1.700v7.200l-1.600 1.700z" fill="#2f78ba"/><path d="M262.7 613.500h6.400v.9h-6.400z" fill="#b5b5b5"/><path d="M272.0 605.200v8" stroke="#555" stroke-width=".8"/></g>
<path d="M282.1 616.400v3" stroke="#c4c4c4" stroke-width=".8"/>
<g opacity="1"><path d="M277.2 606.300l1.600-1.700h6.400v7.200l-1.600 1.700h-6.400z" fill="#4f9ddd"/><path d="M277.2 606.300l1.600-1.700h6.400l-1.600 1.700z" fill="#8cc6f2"/><path d="M283.6 606.300l1.600-1.700v7.200l-1.600 1.700z" fill="#2f78ba"/><path d="M277.2 613.500h6.400v.9h-6.400z" fill="#b5b5b5"/><path d="M286.5 605.200v8" stroke="#555" stroke-width=".8"/></g>
<path d="M296.7 616.400v3" stroke="#c4c4c4" stroke-width=".8"/>
<g opacity="1"><path d="M291.8 606.300l1.600-1.700h6.400v7.200l-1.600 1.700h-6.400z" fill="#4f9ddd"/><path d="M291.8 606.300l1.600-1.700h6.400l-1.600 1.700z" fill="#8cc6f2"/><path d="M298.2 606.300l1.600-1.700v7.200l-1.600 1.700z" fill="#2f78ba"/><path d="M291.8 613.500h6.400v.9h-6.400z" fill="#b5b5b5"/><path d="M301.1 605.200v8" stroke="#555" stroke-width=".8"/></g>
<path d="M311.2 616.400v3" stroke="#c4c4c4" stroke-width=".8"/>
<g opacity="1"><path d="M306.3 606.300l1.600-1.700h6.400v7.200l-1.600 1.700h-6.400z" fill="#4f9ddd"/><path d="M306.3 606.300l1.600-1.700h6.400l-1.600 1.700z" fill="#8cc6f2"/><path d="M312.7 606.300l1.600-1.700v7.200l-1.600 1.700z" fill="#2f78ba"/><path d="M306.3 613.500h6.400v.9h-6.400z" fill="#b5b5b5"/><path d="M315.6 605.200v8" stroke="#555" stroke-width=".8"/></g>
<path d="M325.7 616.400v3" stroke="#c4c4c4" stroke-width=".8"/>
<g opacity="1"><path d="M320.8 606.300l1.600-1.700h6.400v7.200l-1.600 1.700h-6.400z" fill="#4f9ddd"/><path d="M320.8 606.300l1.600-1.700h6.400l-1.600 1.700z" fill="#8cc6f2"/><path d="M327.2 606.300l1.600-1.700v7.200l-1.600 1.700z" fill="#2f78ba"/><path d="M320.8 613.500h6.400v.9h-6.400z" fill="#b5b5b5"/><path d="M330.1 605.200v8" stroke="#555" stroke-width=".8"/></g>
<path d="M340.3 616.400v3" stroke="#c4c4c4" stroke-width=".8"/>
<g opacity="1"><path d="M335.4 606.300l1.600-1.700h6.400v7.200l-1.600 1.700h-6.400z" fill="#4f9ddd"/><path d="M335.4 606.300l1.600-1.700h6.400l-1.600 1.700z" fill="#8cc6f2"/><path d="M341.8 606.300l1.600-1.700v7.200l-1.600 1.700z" fill="#2f78ba"/><path d="M335.4 613.500h6.400v.9h-6.400z" fill="#b5b5b5"/><path d="M344.7 605.200v8" stroke="#555" stroke-width=".8"/></g>
<path d="M354.8 616.400v3" stroke="#c4c4c4" stroke-width=".8"/>
<g opacity="1"><path d="M349.9 606.300l1.600-1.700h6.400v7.200l-1.600 1.700h-6.400z" fill="#4f9ddd"/><path d="M349.9 606.300l1.600-1.700h6.400l-1.600 1.700z" fill="#8cc6f2"/><path d="M356.3 606.300l1.600-1.700v7.200l-1.600 1.700z" fill="#2f78ba"/><path d="M349.9 613.500h6.400v.9h-6.400z" fill="#b5b5b5"/><path d="M359.2 605.200v8" stroke="#555" stroke-width=".8"/></g>
<path d="M369.4 616.400v3" stroke="#c4c4c4" stroke-width=".8"/>
<g opacity="1"><path d="M364.5 606.300l1.600-1.700h6.400v7.200l-1.600 1.700h-6.400z" fill="#4f9ddd"/><path d="M364.5 606.300l1.600-1.700h6.400l-1.600 1.700z" fill="#8cc6f2"/><path d="M370.9 606.300l1.600-1.700v7.200l-1.600 1.700z" fill="#2f78ba"/><path d="M364.5 613.500h6.400v.9h-6.400z" fill="#b5b5b5"/><path d="M373.8 605.200v8" stroke="#555" stroke-width=".8"/></g>
<path d="M383.9 616.400v3" stroke="#c4c4c4" stroke-width=".8"/>
<g opacity="1"><rect x="379.2" y="604.400" width="9.300" height="9" fill="#4f9fe0"/><path d="M379.2 613.400v-2.600l2.700-2.700 2.300 2.400 1.400-1.300 2.900 2.900v1.300z" fill="#2f7cc0"/><circle cx="386.0" cy="606.800" r="1" fill="#fff"/></g>
<path d="M398.4 616.400v3" stroke="#c4c4c4" stroke-width=".8"/>
<g opacity="1"><rect x="393.5" y="605.200" width="8" height="7.600" fill="#fdfdfd" stroke="#777" stroke-width=".8" stroke-dasharray="1.600 .8"/><g fill="#3b8fd6"><rect x="392.8" y="604.400" width="1.500" height="1.500"/><rect x="400.8" y="604.400" width="1.500" height="1.500"/><rect x="392.8" y="612.100" width="1.500" height="1.500"/></g><path d="M397.7 613.600l1-2.600 4-4 1.600 1.600-4 4z" fill="#f0a020"/><path d="M397.7 613.600l1-2.600 1.600 1.600z" fill="#c25a10"/></g>
<path d="M413.0 616.400v3" stroke="#c4c4c4" stroke-width=".8"/>
<g opacity="1"><path d="M408.1 606.300l1.600-1.700h6.400v7.200l-1.600 1.700h-6.400z" fill="#4f9ddd"/><path d="M408.1 606.300l1.600-1.700h6.400l-1.600 1.700z" fill="#8cc6f2"/><path d="M414.5 606.300l1.600-1.700v7.200l-1.600 1.700z" fill="#2f78ba"/><path d="M408.1 613.500h6.400v.9h-6.400z" fill="#b5b5b5"/><path d="M417.4 605.200v8" stroke="#555" stroke-width=".8"/></g>
<path d="M427.5 616.400v3" stroke="#c4c4c4" stroke-width=".8"/>
<g opacity="1"><rect x="422.8" y="604.400" width="9.300" height="9" fill="#4f9fe0"/><path d="M422.8 613.400v-2.600l2.700-2.700 2.300 2.400 1.400-1.300 2.900 2.900v1.300z" fill="#2f7cc0"/><circle cx="429.6" cy="606.800" r="1" fill="#fff"/></g>
<path d="M442.1 616.400v3" stroke="#c4c4c4" stroke-width=".8"/>
<g opacity="1"><rect x="437.2" y="605.200" width="8" height="7.600" fill="#fdfdfd" stroke="#777" stroke-width=".8" stroke-dasharray="1.600 .8"/><g fill="#3b8fd6"><rect x="436.5" y="604.400" width="1.500" height="1.500"/><rect x="444.5" y="604.400" width="1.500" height="1.500"/><rect x="436.5" y="612.100" width="1.500" height="1.500"/></g><path d="M441.4 613.600l1-2.600 4-4 1.600 1.600-4 4z" fill="#f0a020"/><path d="M441.4 613.600l1-2.600 1.600 1.600z" fill="#c25a10"/></g>
<path d="M456.6 616.400v3" stroke="#c4c4c4" stroke-width=".8"/>
<g opacity="1"><path d="M451.7 606.300l1.600-1.700h6.400v7.200l-1.600 1.700h-6.400z" fill="#4f9ddd"/><path d="M451.7 606.300l1.600-1.700h6.400l-1.600 1.700z" fill="#8cc6f2"/><path d="M458.1 606.300l1.600-1.700v7.200l-1.600 1.700z" fill="#2f78ba"/><path d="M451.7 613.500h6.400v.9h-6.400z" fill="#b5b5b5"/><path d="M461.0 605.200v8" stroke="#555" stroke-width=".8"/></g>
<rect x="464.3" y="602.600" width="13.600" height="13.400" fill="#f7cd94" opacity="1"/>
<path d="M471.1 616.400v3" stroke="#c4c4c4" stroke-width=".8"/>
<g opacity="1"><path d="M466.2 606.300l1.600-1.700h6.400v7.200l-1.600 1.700h-6.400z" fill="#4f9ddd"/><path d="M466.2 606.300l1.600-1.700h6.400l-1.600 1.700z" fill="#8cc6f2"/><path d="M472.6 606.300l1.600-1.700v7.200l-1.600 1.700z" fill="#2f78ba"/><path d="M466.2 613.500h6.400v.9h-6.400z" fill="#b5b5b5"/><path d="M475.5 605.200v8" stroke="#555" stroke-width=".8"/></g>
<rect x="478.9" y="602.600" width="13.600" height="13.400" fill="#f7cd94" opacity="1"/>
<path d="M485.7 616.400v3" stroke="#c4c4c4" stroke-width=".8"/>
<g opacity="1"><path d="M480.8 606.300l1.600-1.700h6.400v7.200l-1.600 1.700h-6.400z" fill="#4f9ddd"/><path d="M480.8 606.300l1.600-1.700h6.400l-1.600 1.700z" fill="#8cc6f2"/><path d="M487.2 606.300l1.600-1.700v7.200l-1.600 1.700z" fill="#2f78ba"/><path d="M480.8 613.500h6.400v.9h-6.400z" fill="#b5b5b5"/><path d="M490.1 605.200v8" stroke="#555" stroke-width=".8"/></g>
<path d="M500.2 616.400v3" stroke="#c4c4c4" stroke-width=".8"/>
<g opacity="1"><path d="M495.3 606.300l1.600-1.700h6.400v7.200l-1.600 1.700h-6.400z" fill="#4f9ddd"/><path d="M495.3 606.300l1.600-1.700h6.400l-1.600 1.700z" fill="#8cc6f2"/><path d="M501.7 606.300l1.600-1.700v7.200l-1.600 1.700z" fill="#2f78ba"/><path d="M495.3 613.500h6.400v.9h-6.400z" fill="#b5b5b5"/><path d="M504.6 605.200v8" stroke="#555" stroke-width=".8"/></g>
<path d="M514.8 616.400v3" stroke="#c4c4c4" stroke-width=".8"/>
<g opacity="1"><path d="M509.9 606.300l1.600-1.700h6.400v7.200l-1.600 1.700h-6.400z" fill="#4f9ddd"/><path d="M509.9 606.300l1.600-1.700h6.400l-1.600 1.700z" fill="#8cc6f2"/><path d="M516.3 606.300l1.600-1.700v7.200l-1.600 1.700z" fill="#2f78ba"/><path d="M509.9 613.500h6.400v.9h-6.400z" fill="#b5b5b5"/><path d="M519.2 605.200v8" stroke="#555" stroke-width=".8"/></g>
<path d="M529.3 616.400v3" stroke="#c4c4c4" stroke-width=".8"/>
<g opacity="1"><path d="M524.4 606.300l1.600-1.700h6.400v7.200l-1.600 1.700h-6.400z" fill="#4f9ddd"/><path d="M524.4 606.300l1.600-1.700h6.400l-1.600 1.700z" fill="#8cc6f2"/><path d="M530.8 606.300l1.600-1.700v7.200l-1.600 1.700z" fill="#2f78ba"/><path d="M524.4 613.500h6.400v.9h-6.400z" fill="#b5b5b5"/><path d="M533.7 605.200v8" stroke="#555" stroke-width=".8"/></g>
<path d="M543.8 616.400v3" stroke="#c4c4c4" stroke-width=".8"/>
<g opacity="1"><rect x="539.1" y="604.400" width="9.300" height="9" fill="#4f9fe0"/><path d="M539.1 613.400v-2.600l2.700-2.700 2.300 2.400 1.400-1.300 2.900 2.900v1.300z" fill="#2f7cc0"/><circle cx="545.9" cy="606.800" r="1" fill="#fff"/></g>
<path d="M558.4 616.400v3" stroke="#c4c4c4" stroke-width=".8"/>
<g opacity="1"><rect x="553.5" y="605.200" width="8" height="7.600" fill="#fdfdfd" stroke="#777" stroke-width=".8" stroke-dasharray="1.600 .8"/><g fill="#3b8fd6"><rect x="552.8" y="604.400" width="1.500" height="1.500"/><rect x="560.8" y="604.400" width="1.500" height="1.500"/><rect x="552.8" y="612.100" width="1.500" height="1.500"/></g><path d="M557.7 613.600l1-2.600 4-4 1.600 1.600-4 4z" fill="#f0a020"/><path d="M557.7 613.600l1-2.600 1.600 1.600z" fill="#c25a10"/></g>
<path d="M572.9 616.400v3" stroke="#c4c4c4" stroke-width=".8"/>
<g opacity="1"><path d="M568.0 606.300l1.600-1.700h6.400v7.200l-1.600 1.700h-6.400z" fill="#4f9ddd"/><path d="M568.0 606.300l1.600-1.700h6.400l-1.600 1.700z" fill="#8cc6f2"/><path d="M574.4 606.300l1.600-1.700v7.200l-1.600 1.700z" fill="#2f78ba"/><path d="M568.0 613.500h6.400v.9h-6.400z" fill="#b5b5b5"/><path d="M577.3 605.200v8" stroke="#555" stroke-width=".8"/></g>
<path d="M587.5 616.400v3" stroke="#c4c4c4" stroke-width=".8"/>
<g opacity="1"><path d="M582.6 606.300l1.600-1.700h6.400v7.200l-1.600 1.700h-6.400z" fill="#4f9ddd"/><path d="M582.6 606.300l1.600-1.700h6.400l-1.600 1.700z" fill="#8cc6f2"/><path d="M589.0 606.300l1.600-1.700v7.200l-1.600 1.700z" fill="#2f78ba"/><path d="M582.6 613.500h6.400v.9h-6.400z" fill="#b5b5b5"/><path d="M591.9 605.200v8" stroke="#555" stroke-width=".8"/></g>
<path d="M602.0 616.400v3" stroke="#c4c4c4" stroke-width=".8"/>
<g opacity="0.28"><path d="M597.1 606.300l1.600-1.700h6.400v7.200l-1.600 1.700h-6.400z" fill="#4f9ddd"/><path d="M597.1 606.300l1.600-1.700h6.400l-1.600 1.700z" fill="#8cc6f2"/><path d="M603.5 606.300l1.600-1.700v7.200l-1.600 1.700z" fill="#2f78ba"/><path d="M597.1 613.500h6.400v.9h-6.400z" fill="#b5b5b5"/><path d="M606.4 605.200v8" stroke="#555" stroke-width=".8"/></g>
<rect x="609.7" y="602.600" width="13.600" height="13.400" fill="#f7cd94" opacity="0.75"/>
<path d="M616.5 616.400v3" stroke="#c4c4c4" stroke-width=".8"/>
<g opacity="0.28"><path d="M611.6 606.300l1.600-1.700h6.400v7.200l-1.600 1.700h-6.400z" fill="#4f9ddd"/><path d="M611.6 606.300l1.600-1.700h6.400l-1.600 1.700z" fill="#8cc6f2"/><path d="M618.0 606.300l1.600-1.700v7.200l-1.600 1.700z" fill="#2f78ba"/><path d="M611.6 613.500h6.400v.9h-6.400z" fill="#b5b5b5"/><path d="M620.9 605.200v8" stroke="#555" stroke-width=".8"/></g>
<path d="M631.1 616.400v3" stroke="#c4c4c4" stroke-width=".8"/>
<g opacity="0.28"><path d="M626.2 606.300l1.600-1.700h6.400v7.200l-1.600 1.700h-6.400z" fill="#4f9ddd"/><path d="M626.2 606.300l1.600-1.700h6.400l-1.600 1.700z" fill="#8cc6f2"/><path d="M632.6 606.300l1.600-1.700v7.200l-1.600 1.700z" fill="#2f78ba"/><path d="M626.2 613.500h6.400v.9h-6.400z" fill="#b5b5b5"/><path d="M635.5 605.200v8" stroke="#555" stroke-width=".8"/></g>
<rect x="638.8" y="602.600" width="13.600" height="13.400" fill="#f7cd94" opacity="0.75"/>
<path d="M645.6 616.400v3" stroke="#c4c4c4" stroke-width=".8"/>
<g opacity="0.28"><path d="M640.7 606.300l1.600-1.700h6.400v7.200l-1.600 1.700h-6.400z" fill="#4f9ddd"/><path d="M640.7 606.300l1.600-1.700h6.400l-1.600 1.700z" fill="#8cc6f2"/><path d="M647.1 606.300l1.600-1.700v7.200l-1.600 1.700z" fill="#2f78ba"/><path d="M640.7 613.500h6.400v.9h-6.400z" fill="#b5b5b5"/><path d="M650.0 605.200v8" stroke="#555" stroke-width=".8"/></g>
<path d="M660.2 616.400v3" stroke="#c4c4c4" stroke-width=".8"/>
<g opacity="0.28"><path d="M655.3 606.300l1.600-1.700h6.400v7.200l-1.600 1.700h-6.400z" fill="#4f9ddd"/><path d="M655.3 606.300l1.600-1.700h6.400l-1.600 1.700z" fill="#8cc6f2"/><path d="M661.7 606.300l1.600-1.700v7.200l-1.600 1.700z" fill="#2f78ba"/><path d="M655.3 613.500h6.400v.9h-6.400z" fill="#b5b5b5"/><path d="M664.6 605.200v8" stroke="#555" stroke-width=".8"/></g>
<path d="M674.7 616.400v3" stroke="#c4c4c4" stroke-width=".8"/>
<g opacity="0.28"><path d="M669.8 606.300l1.600-1.700h6.400v7.200l-1.600 1.700h-6.400z" fill="#4f9ddd"/><path d="M669.8 606.300l1.600-1.700h6.400l-1.600 1.700z" fill="#8cc6f2"/><path d="M676.2 606.300l1.600-1.700v7.200l-1.600 1.700z" fill="#2f78ba"/><path d="M669.8 613.500h6.400v.9h-6.400z" fill="#b5b5b5"/><path d="M679.1 605.200v8" stroke="#555" stroke-width=".8"/></g>
<path d="M689.2 616.400v3" stroke="#c4c4c4" stroke-width=".8"/>
<g opacity="0.28"><path d="M684.3 606.300l1.600-1.700h6.400v7.200l-1.600 1.700h-6.400z" fill="#4f9ddd"/><path d="M684.3 606.300l1.600-1.700h6.400l-1.600 1.700z" fill="#8cc6f2"/><path d="M690.7 606.300l1.600-1.700v7.200l-1.600 1.700z" fill="#2f78ba"/><path d="M684.3 613.500h6.400v.9h-6.400z" fill="#b5b5b5"/><path d="M693.6 605.200v8" stroke="#555" stroke-width=".8"/></g>
<path d="M703.8 616.400v3" stroke="#c4c4c4" stroke-width=".8"/>
<g opacity="0.28"><path d="M698.9 606.300l1.600-1.700h6.400v7.200l-1.600 1.700h-6.400z" fill="#4f9ddd"/><path d="M698.9 606.300l1.600-1.700h6.400l-1.600 1.700z" fill="#8cc6f2"/><path d="M705.3 606.300l1.600-1.700v7.200l-1.600 1.700z" fill="#2f78ba"/><path d="M698.9 613.500h6.400v.9h-6.400z" fill="#b5b5b5"/><path d="M708.2 605.200v8" stroke="#555" stroke-width=".8"/></g>
<path d="M718.3 616.400v3" stroke="#c4c4c4" stroke-width=".8"/>
<g opacity="0.28"><path d="M713.4 606.300l1.600-1.700h6.400v7.200l-1.600 1.700h-6.400z" fill="#4f9ddd"/><path d="M713.4 606.300l1.600-1.700h6.400l-1.600 1.700z" fill="#8cc6f2"/><path d="M719.8 606.300l1.600-1.700v7.200l-1.600 1.700z" fill="#2f78ba"/><path d="M713.4 613.500h6.400v.9h-6.400z" fill="#b5b5b5"/><path d="M722.7 605.200v8" stroke="#555" stroke-width=".8"/></g>
<rect x="726.1" y="602.600" width="13.600" height="13.400" fill="#f7cd94" opacity="0.75"/>
<path d="M732.9 616.400v3" stroke="#c4c4c4" stroke-width=".8"/>
<g opacity="0.28"><path d="M728.0 606.300l1.600-1.700h6.400v7.200l-1.600 1.700h-6.400z" fill="#4f9ddd"/><path d="M728.0 606.300l1.600-1.700h6.400l-1.600 1.700z" fill="#8cc6f2"/><path d="M734.4 606.300l1.600-1.700v7.200l-1.600 1.700z" fill="#2f78ba"/><path d="M728.0 613.500h6.400v.9h-6.400z" fill="#b5b5b5"/><path d="M737.3 605.200v8" stroke="#555" stroke-width=".8"/></g>
<rect x="740.6" y="602.600" width="13.600" height="13.400" fill="#f7cd94" opacity="0.75"/>
<path d="M747.4 616.400v3" stroke="#c4c4c4" stroke-width=".8"/>
<g opacity="0.28"><path d="M742.5 606.300l1.600-1.700h6.400v7.200l-1.600 1.700h-6.400z" fill="#4f9ddd"/><path d="M742.5 606.300l1.600-1.700h6.400l-1.600 1.700z" fill="#8cc6f2"/><path d="M748.9 606.300l1.600-1.700v7.200l-1.600 1.700z" fill="#2f78ba"/><path d="M742.5 613.500h6.400v.9h-6.400z" fill="#b5b5b5"/><path d="M751.8 605.200v8" stroke="#555" stroke-width=".8"/></g>
<path d="M595 608v12.500" stroke="#222" stroke-width="1.300"/><path d="M591.600 604.200h6.800v1.600l-3.400 3.200-3.400-3.200z" fill="#222"/>
<path d="M1155.59 610.13L1155.34 611.40L1153.83 611.40L1153.31 612.17L1153.89 613.56L1152.82 614.28L1151.75 613.21L1150.84 613.39L1150.27 614.79L1149.00 614.54L1149.00 613.03L1148.23 612.51L1146.84 613.09L1146.12 612.02L1147.19 610.95L1147.01 610.04L1145.61 609.47L1145.86 608.20L1147.37 608.20L1147.89 607.43L1147.31 606.04L1148.38 605.32L1149.45 606.39L1150.36 606.21L1150.93 604.81L1152.20 605.06L1152.20 606.57L1152.97 607.09L1154.36 606.51L1155.08 607.58L1154.01 608.65L1154.19 609.56z" fill="#555"/><circle cx="1150.6" cy="609.8" r="1.900" fill="#f4f4f4"/>
</svg>
<div class="abs" style="left:509px;top:576.200px;width:145.500px;height:15.200px;background:#fdfdfd;box-shadow:0 0 1px #bbb"></div>
<svg class="abs" style="left:505px;top:574px" width="155" height="20" viewBox="505 574 155 20">
<ellipse cx="516.200" cy="583.600" rx="4.800" ry="2.300" fill="none" stroke="#444" stroke-width="1"/><path d="M516.200 577.800v10.500" stroke="#5a9bd4" stroke-width=".9"/><path d="M514.600 586.600l2.200-.9v1.800z" fill="#444"/>
<path d="M525.2 582.8h2.8l-1.4 1.7z" fill="#555"/>
<path d="M532.200 581h9.600v6.600h-9.600z" fill="#4d94d4"/><path d="M533.600 581l1.400-2h4.200l1.400 2z" fill="#4d94d4"/><path d="M533.400 582.200h7.200v4.200h-7.200z" fill="#74b0e4"/>
<path d="M550.200 588.200q-2.200-2.600-2.600-4.600l1.400-.4 1.200 1.800v-5.200h1.200v3.600-4.600h1.200v4.600-4h1.200v4.200-3h1.200v5.400q0 1.400-1 2.400z" fill="#fff" stroke="#888" stroke-width=".7" stroke-linejoin="round"/>
<circle cx="567" cy="583" r="3.300" fill="#e8e8e8" stroke="#666" stroke-width="1"/><path d="M569.400 585.600l3.200 3.200" stroke="#666" stroke-width="1.500"/><path d="M571.800 578.200v3.200M570.600 579.200l1.200-1.200 1.200 1.200M570.600 580.600l1.200 1.200 1.200-1.200" stroke="#555" stroke-width=".6" fill="none"/>
<rect x="579.200" y="578.400" width="10.400" height="10.800" fill="#f1f1f1" stroke="#777" stroke-width=".8"/><circle cx="584" cy="583.200" r="3.700" fill="#dcdcdc" stroke="#888" stroke-width=".8"/><path d="M586.600 586l3 3.200" stroke="#666" stroke-width="1.200"/>
<path d="M593.0 582.8h2.7l-1.4 1.7z" fill="#555"/>
<rect x="599.600" y="579.200" width="10.400" height="6.800" rx=".8" fill="#a9a9a9" stroke="#8c8c8c" stroke-width=".6"/><path d="M603 586h3.600v1.200h-3.600zM601.600 587.400h6.400" stroke="#8c8c8c" stroke-width=".8" fill="#8c8c8c"/>
<path d="M611.8 582.8h2.5l-1.2 1.6z" fill="#555"/>
<rect x="618.400" y="578.500" width="8.400" height="8.400" fill="#fafafa" stroke="#555" stroke-width=".8"/><path d="M621.200 578.500v8.400M624 578.500v8.400M618.400 581.300h8.400M618.400 584.100h8.400" stroke="#555" stroke-width=".7"/>
<path d="M630.6 582.8h2.7l-1.3 1.6z" fill="#555"/>
<rect x="637.200" y="579.200" width="10" height="8.400" fill="#b9b9b9" stroke="#777" stroke-width=".8"/><path d="M642.200 579.200v8.400M637.200 583.400h10" stroke="#777" stroke-width=".8"/>
<path d="M649.4 582.8h2.8l-1.4 1.7z" fill="#555"/>
</svg>
<svg class="abs" style="left:1090px;top:90px" width="70" height="75" viewBox="1090 90 70 75">
<defs><filter id="cb" x="-20%" y="-20%" width="140%" height="140%"><feGaussianBlur stdDeviation="1.2"/></filter></defs>
<path d="M1106 134.500l22 12.300 16.500-15.500 2 3.500-17.500 16-23-13z" fill="#ddd" filter="url(#cb)"/>
<path d="M1104.300 115.100l17.900-16 23.700 12.800-17.300 17.300z" fill="#f0f0f0"/>
<path d="M1104.300 115.100l24.300 14.100-.7 17.300-21.700-12.200z" fill="#e9e9e9"/>
<path d="M1128.600 129.200l17.300-17.300-1.900 19.200-16.100 15.400z" fill="#d7d7d7"/>
<path d="M1110 110l12.500-11 18 9.600M1128.600 129.200l-.5 12M1110 118.500l18.600 10.700 11-11" fill="none" stroke="#9a9a9a" stroke-width=".6" stroke-dasharray="3 2"/>
<path d="M1106.200 134.300l-4.500-23.700" stroke="#5b55d6" stroke-width="1.300"/><path d="M1106.200 134.300l27.500 16" stroke="#e8949c" stroke-width="1.300"/>
<text x="0" y="0" font-family="Liberation Sans, sans-serif" font-size="6.800" fill="#6a6a6a" transform="matrix(.86 .46 -.72 .66 1120 109.800)">TOP</text>
<text x="0" y="0" font-family="Liberation Sans, sans-serif" font-size="4.800" fill="#777" transform="matrix(.86 .5 -.05 1 1107.600 130.400)">FRONT</text>
<text x="0" y="0" font-family="Liberation Sans, sans-serif" font-size="4.200" fill="#909090" transform="matrix(.7 -.7 -.08 1 1130.800 140)">RIGHT</text>
<text x="1097.800" y="110.600" font-family="Liberation Sans, sans-serif" font-size="7" fill="#5b55d6">Z</text>
<text x="1133" y="155.400" font-family="Liberation Sans, sans-serif" font-size="6.400" fill="#e0707c">X</text>
</svg>
</body></html>
